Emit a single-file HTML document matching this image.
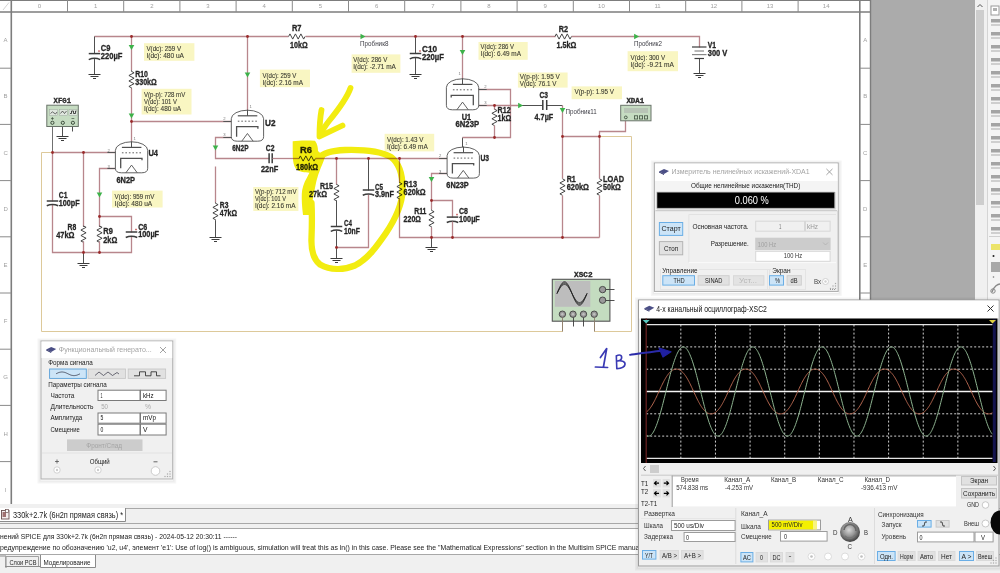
<!DOCTYPE html><html><head><meta charset="utf-8"><style>body{margin:0;width:1000px;height:573px;overflow:hidden;position:relative;background:#fff;font-family:"Liberation Sans",sans-serif}</style></head><body><svg width="1000" height="573" viewBox="0 0 1000 573" style="position:absolute;left:0;top:0" font-family="Liberation Sans, sans-serif"><rect x="0.00" y="0.00" width="1000.00" height="573.00" fill="#fff"/><rect x="871.00" y="0.00" width="104.00" height="508.00" fill="#ababab"/><rect x="975.00" y="0.00" width="12.00" height="508.00" fill="#f0f0f0"/><rect x="976.00" y="10.00" width="8.00" height="195.00" fill="#cdcdcd"/><path d="M977.5 7 L980 4.5 L982.5 7" stroke="#555" stroke-width="1" fill="none"/><rect x="987.00" y="0.00" width="1.00" height="508.00" fill="#d4d4d4"/><rect x="988.00" y="0.00" width="12.00" height="508.00" fill="#f6f6f6"/><rect x="988.00" y="0.00" width="12.00" height="508.00" fill="#f4f4f4"/><rect x="991.00" y="6.00" width="8.00" height="9.00" fill="#fff" stroke="#9a9a9a" stroke-width="1"/><rect x="993.00" y="8.00" width="4.00" height="3.00" fill="#b0b0b0"/><rect x="991.00" y="19.00" width="9.00" height="3.50" fill="#a4a4a4"/><rect x="991.00" y="24.00" width="9.00" height="2.00" fill="#cfcfcf"/><rect x="991.00" y="32.00" width="9.00" height="3.50" fill="#a4a4a4"/><rect x="991.00" y="37.00" width="9.00" height="2.00" fill="#cfcfcf"/><rect x="991.00" y="45.00" width="9.00" height="3.50" fill="#a4a4a4"/><rect x="991.00" y="50.00" width="9.00" height="2.00" fill="#cfcfcf"/><rect x="991.00" y="58.00" width="9.00" height="3.50" fill="#a4a4a4"/><rect x="991.00" y="63.00" width="9.00" height="2.00" fill="#cfcfcf"/><rect x="991.00" y="71.00" width="9.00" height="3.50" fill="#a4a4a4"/><rect x="991.00" y="76.00" width="9.00" height="2.00" fill="#cfcfcf"/><rect x="991.00" y="84.00" width="9.00" height="3.50" fill="#a4a4a4"/><rect x="991.00" y="89.00" width="9.00" height="2.00" fill="#cfcfcf"/><rect x="991.00" y="97.00" width="9.00" height="3.50" fill="#a4a4a4"/><rect x="991.00" y="102.00" width="9.00" height="2.00" fill="#cfcfcf"/><rect x="991.00" y="110.00" width="9.00" height="3.50" fill="#a4a4a4"/><rect x="991.00" y="115.00" width="9.00" height="2.00" fill="#cfcfcf"/><rect x="991.00" y="123.00" width="9.00" height="3.50" fill="#a4a4a4"/><rect x="991.00" y="128.00" width="9.00" height="2.00" fill="#cfcfcf"/><rect x="991.00" y="136.00" width="9.00" height="3.50" fill="#a4a4a4"/><rect x="991.00" y="141.00" width="9.00" height="2.00" fill="#cfcfcf"/><rect x="991.00" y="149.00" width="9.00" height="3.50" fill="#a4a4a4"/><rect x="991.00" y="154.00" width="9.00" height="2.00" fill="#cfcfcf"/><rect x="991.00" y="162.00" width="9.00" height="3.50" fill="#a4a4a4"/><rect x="991.00" y="167.00" width="9.00" height="2.00" fill="#cfcfcf"/><rect x="991.00" y="175.00" width="9.00" height="3.50" fill="#a4a4a4"/><rect x="991.00" y="180.00" width="9.00" height="2.00" fill="#cfcfcf"/><rect x="991.00" y="188.00" width="9.00" height="3.50" fill="#a4a4a4"/><rect x="991.00" y="193.00" width="9.00" height="2.00" fill="#cfcfcf"/><rect x="991.00" y="201.00" width="9.00" height="3.50" fill="#a4a4a4"/><rect x="991.00" y="206.00" width="9.00" height="2.00" fill="#cfcfcf"/><rect x="991.00" y="214.00" width="9.00" height="3.50" fill="#a4a4a4"/><rect x="991.00" y="219.00" width="9.00" height="2.00" fill="#cfcfcf"/><rect x="991.00" y="227.00" width="9.00" height="3.50" fill="#a4a4a4"/><rect x="991.00" y="232.00" width="9.00" height="2.00" fill="#cfcfcf"/><line x1="989.00" y1="236.50" x2="1000.00" y2="236.50" stroke="#cfcfcf" stroke-width="1"/><rect x="991.00" y="244.00" width="9.00" height="6.00" fill="#ece46a"/><circle cx="993.50" cy="256.00" r="1.00" fill="#222"/><rect x="991.00" y="262.00" width="9.00" height="10.00" fill="#a8a8a8"/><circle cx="993.50" cy="277.00" r="0.80" fill="#777"/><path d="M992 292 C994 286 998 284 1000 284" stroke="#888" stroke-width="1.4" fill="none"/><circle cx="993.00" cy="291.00" r="2.20" fill="none" stroke="#888" stroke-width="1"/><line x1="0.00" y1="0.50" x2="871.00" y2="0.50" stroke="#7d7d7d" stroke-width="1.2"/><line x1="3.00" y1="10.00" x2="9.00" y2="2.50" stroke="#c8c8c8" stroke-width="0.8"/><line x1="0.00" y1="12.00" x2="871.00" y2="12.00" stroke="#7d7d7d" stroke-width="1.6"/><line x1="11.30" y1="0.00" x2="11.30" y2="504.00" stroke="#7d7d7d" stroke-width="1.6"/><line x1="859.80" y1="0.00" x2="859.80" y2="504.00" stroke="#7d7d7d" stroke-width="1.6"/><line x1="870.50" y1="0.00" x2="870.50" y2="504.00" stroke="#7d7d7d" stroke-width="1.4"/><line x1="67.50" y1="0.00" x2="67.50" y2="12.00" stroke="#8a8a8a" stroke-width="1"/><line x1="123.70" y1="0.00" x2="123.70" y2="12.00" stroke="#8a8a8a" stroke-width="1"/><line x1="179.90" y1="0.00" x2="179.90" y2="12.00" stroke="#8a8a8a" stroke-width="1"/><line x1="236.10" y1="0.00" x2="236.10" y2="12.00" stroke="#8a8a8a" stroke-width="1"/><line x1="292.30" y1="0.00" x2="292.30" y2="12.00" stroke="#8a8a8a" stroke-width="1"/><line x1="348.50" y1="0.00" x2="348.50" y2="12.00" stroke="#8a8a8a" stroke-width="1"/><line x1="404.70" y1="0.00" x2="404.70" y2="12.00" stroke="#8a8a8a" stroke-width="1"/><line x1="460.90" y1="0.00" x2="460.90" y2="12.00" stroke="#8a8a8a" stroke-width="1"/><line x1="517.10" y1="0.00" x2="517.10" y2="12.00" stroke="#8a8a8a" stroke-width="1"/><line x1="573.30" y1="0.00" x2="573.30" y2="12.00" stroke="#8a8a8a" stroke-width="1"/><line x1="629.50" y1="0.00" x2="629.50" y2="12.00" stroke="#8a8a8a" stroke-width="1"/><line x1="685.70" y1="0.00" x2="685.70" y2="12.00" stroke="#8a8a8a" stroke-width="1"/><line x1="741.90" y1="0.00" x2="741.90" y2="12.00" stroke="#8a8a8a" stroke-width="1"/><line x1="798.10" y1="0.00" x2="798.10" y2="12.00" stroke="#8a8a8a" stroke-width="1"/><text x="39.4" y="7.8" font-size="6" fill="#a0a0a0" text-anchor="middle">0</text><text x="95.6" y="7.8" font-size="6" fill="#a0a0a0" text-anchor="middle">1</text><text x="151.8" y="7.8" font-size="6" fill="#a0a0a0" text-anchor="middle">2</text><text x="208.0" y="7.8" font-size="6" fill="#a0a0a0" text-anchor="middle">3</text><text x="264.2" y="7.8" font-size="6" fill="#a0a0a0" text-anchor="middle">4</text><text x="320.4" y="7.8" font-size="6" fill="#a0a0a0" text-anchor="middle">5</text><text x="376.6" y="7.8" font-size="6" fill="#a0a0a0" text-anchor="middle">6</text><text x="432.8" y="7.8" font-size="6" fill="#a0a0a0" text-anchor="middle">7</text><text x="489.0" y="7.8" font-size="6" fill="#a0a0a0" text-anchor="middle">8</text><text x="545.2" y="7.8" font-size="6" fill="#a0a0a0" text-anchor="middle">9</text><text x="601.4" y="7.8" font-size="6" fill="#a0a0a0" text-anchor="middle">10</text><text x="657.6" y="7.8" font-size="6" fill="#a0a0a0" text-anchor="middle">11</text><text x="713.8" y="7.8" font-size="6" fill="#a0a0a0" text-anchor="middle">12</text><text x="770.0" y="7.8" font-size="6" fill="#a0a0a0" text-anchor="middle">13</text><text x="826.2" y="7.8" font-size="6" fill="#a0a0a0" text-anchor="middle">14</text><line x1="0.00" y1="68.20" x2="11.30" y2="68.20" stroke="#8a8a8a" stroke-width="1"/><line x1="859.80" y1="68.20" x2="870.50" y2="68.20" stroke="#8a8a8a" stroke-width="1"/><text x="5.6" y="42.1" font-size="6" fill="#a0a0a0" text-anchor="middle">A</text><text x="865.2" y="42.1" font-size="6" fill="#a0a0a0" text-anchor="middle">A</text><line x1="0.00" y1="124.40" x2="11.30" y2="124.40" stroke="#8a8a8a" stroke-width="1"/><line x1="859.80" y1="124.40" x2="870.50" y2="124.40" stroke="#8a8a8a" stroke-width="1"/><text x="5.6" y="98.3" font-size="6" fill="#a0a0a0" text-anchor="middle">B</text><text x="865.2" y="98.3" font-size="6" fill="#a0a0a0" text-anchor="middle">B</text><line x1="0.00" y1="180.60" x2="11.30" y2="180.60" stroke="#8a8a8a" stroke-width="1"/><line x1="859.80" y1="180.60" x2="870.50" y2="180.60" stroke="#8a8a8a" stroke-width="1"/><text x="5.6" y="154.5" font-size="6" fill="#a0a0a0" text-anchor="middle">C</text><text x="865.2" y="154.5" font-size="6" fill="#a0a0a0" text-anchor="middle">C</text><line x1="0.00" y1="236.80" x2="11.30" y2="236.80" stroke="#8a8a8a" stroke-width="1"/><line x1="859.80" y1="236.80" x2="870.50" y2="236.80" stroke="#8a8a8a" stroke-width="1"/><text x="5.6" y="210.7" font-size="6" fill="#a0a0a0" text-anchor="middle">D</text><text x="865.2" y="210.7" font-size="6" fill="#a0a0a0" text-anchor="middle">D</text><line x1="0.00" y1="293.00" x2="11.30" y2="293.00" stroke="#8a8a8a" stroke-width="1"/><line x1="859.80" y1="293.00" x2="870.50" y2="293.00" stroke="#8a8a8a" stroke-width="1"/><text x="5.6" y="266.9" font-size="6" fill="#a0a0a0" text-anchor="middle">E</text><text x="865.2" y="266.9" font-size="6" fill="#a0a0a0" text-anchor="middle">E</text><line x1="0.00" y1="349.20" x2="11.30" y2="349.20" stroke="#8a8a8a" stroke-width="1"/><line x1="859.80" y1="349.20" x2="870.50" y2="349.20" stroke="#8a8a8a" stroke-width="1"/><text x="5.6" y="323.1" font-size="6" fill="#a0a0a0" text-anchor="middle">F</text><text x="865.2" y="323.1" font-size="6" fill="#a0a0a0" text-anchor="middle">F</text><line x1="0.00" y1="405.40" x2="11.30" y2="405.40" stroke="#8a8a8a" stroke-width="1"/><line x1="859.80" y1="405.40" x2="870.50" y2="405.40" stroke="#8a8a8a" stroke-width="1"/><text x="5.6" y="379.3" font-size="6" fill="#a0a0a0" text-anchor="middle">G</text><text x="865.2" y="379.3" font-size="6" fill="#a0a0a0" text-anchor="middle">G</text><line x1="0.00" y1="461.60" x2="11.30" y2="461.60" stroke="#8a8a8a" stroke-width="1"/><line x1="859.80" y1="461.60" x2="870.50" y2="461.60" stroke="#8a8a8a" stroke-width="1"/><text x="5.6" y="435.5" font-size="6" fill="#a0a0a0" text-anchor="middle">H</text><text x="865.2" y="435.5" font-size="6" fill="#a0a0a0" text-anchor="middle">H</text><text x="5.6" y="491.7" font-size="6" fill="#a0a0a0" text-anchor="middle">I</text><text x="865.2" y="491.7" font-size="6" fill="#a0a0a0" text-anchor="middle">I</text><path d="M94.50,36.50 L288.50,36.50" stroke="#b8868c" stroke-width="1.3" fill="none" stroke-linejoin="miter"/><path d="M305.50,36.50 L555.50,36.50" stroke="#b8868c" stroke-width="1.3" fill="none" stroke-linejoin="miter"/><path d="M571.50,36.50 L699.50,36.50 L699.50,47.50" stroke="#b8868c" stroke-width="1.3" fill="none" stroke-linejoin="miter"/><path d="M288.60,36.50 L288.60,36.50 L289.97,33.90 L292.70,39.10 L295.43,33.90 L298.17,39.10 L300.90,33.90 L303.63,39.10 L305.00,36.50 L305.00,36.50" stroke="#3c3c3c" stroke-width="0.95" fill="none" stroke-linejoin="miter"/><path d="M555.00,36.50 L555.00,36.50 L556.37,33.90 L559.10,39.10 L561.83,33.90 L564.57,39.10 L567.30,33.90 L570.03,39.10 L571.40,36.50 L571.40,36.50" stroke="#3c3c3c" stroke-width="0.95" fill="none" stroke-linejoin="miter"/><path d="M94.50,36.50 L94.50,53.50" stroke="#3c3c3c" stroke-width="0.9" fill="none" stroke-linejoin="miter"/><path d="M94.50,58.50 L94.50,74.50" stroke="#3c3c3c" stroke-width="0.9" fill="none" stroke-linejoin="miter"/><line x1="88.75" y1="53.60" x2="100.25" y2="53.60" stroke="#3c3c3c" stroke-width="1.5"/><path d="M88.75,59.60 Q94.50,57.00 100.25,59.60" stroke="#3c3c3c" stroke-width="1.5" fill="none"/><path d="M98.00,51.10 L100.00,51.10 M99.00,50.10 L99.00,52.10" stroke="#c04040" stroke-width="0.6" fill="none"/><line x1="88.50" y1="74.50" x2="100.50" y2="74.50" stroke="#3c3c3c" stroke-width="1"/><line x1="90.50" y1="76.50" x2="98.50" y2="76.50" stroke="#3c3c3c" stroke-width="1"/><line x1="93.00" y1="78.50" x2="96.00" y2="78.50" stroke="#3c3c3c" stroke-width="1"/><path d="M131.50,36.50 L131.50,70.50" stroke="#b8868c" stroke-width="1.3" fill="none" stroke-linejoin="miter"/><path d="M131.50,70.40 L131.50,71.40 L134.10,72.77 L128.90,75.50 L134.10,78.23 L128.90,80.97 L134.10,83.70 L128.90,86.43 L131.50,87.80 L131.50,88.80" stroke="#3c3c3c" stroke-width="0.95" fill="none" stroke-linejoin="miter"/><path d="M131.50,88.50 L131.50,141.50" stroke="#b8868c" stroke-width="1.3" fill="none" stroke-linejoin="miter"/><path d="M131.50,121.50 L231.50,121.50" stroke="#b8868c" stroke-width="1.3" fill="none" stroke-linejoin="miter"/><path d="M247.50,36.50 L247.50,110.50" stroke="#b8868c" stroke-width="1.3" fill="none" stroke-linejoin="miter"/><path d="M231.50,137.50 L215.50,137.50 L215.50,158.50 L269.50,158.50" stroke="#b8868c" stroke-width="1.3" fill="none" stroke-linejoin="miter"/><line x1="269.10" y1="153.20" x2="269.10" y2="163.20" stroke="#3c3c3c" stroke-width="1.5"/><line x1="272.20" y1="153.20" x2="272.20" y2="163.20" stroke="#3c3c3c" stroke-width="1.5"/><path d="M272.50,158.50 L299.50,158.50" stroke="#b8868c" stroke-width="1.3" fill="none" stroke-linejoin="miter"/><path d="M299.00,158.50 L299.00,158.50 L300.37,155.90 L303.10,161.10 L305.83,155.90 L308.57,161.10 L311.30,155.90 L314.03,161.10 L315.40,158.50 L315.40,158.50" stroke="#3c3c3c" stroke-width="0.95" fill="none" stroke-linejoin="miter"/><path d="M315.50,158.50 L447.50,158.50" stroke="#b8868c" stroke-width="1.3" fill="none" stroke-linejoin="miter"/><path d="M215.50,166.50 L215.50,202.50" stroke="#b8868c" stroke-width="1.3" fill="none" stroke-linejoin="miter"/><path d="M215.50,202.40 L215.50,203.30 L218.10,204.67 L212.90,207.40 L218.10,210.13 L212.90,212.87 L218.10,215.60 L212.90,218.33 L215.50,219.70 L215.50,220.60" stroke="#3c3c3c" stroke-width="0.95" fill="none" stroke-linejoin="miter"/><path d="M215.50,220.50 L215.50,237.50" stroke="#3c3c3c" stroke-width="0.9" fill="none" stroke-linejoin="miter"/><line x1="209.50" y1="237.50" x2="221.50" y2="237.50" stroke="#3c3c3c" stroke-width="1"/><line x1="211.50" y1="239.50" x2="219.50" y2="239.50" stroke="#3c3c3c" stroke-width="1"/><line x1="214.00" y1="241.50" x2="217.00" y2="241.50" stroke="#3c3c3c" stroke-width="1"/><path d="M336.50,158.50 L336.50,184.50" stroke="#b8868c" stroke-width="1.3" fill="none" stroke-linejoin="miter"/><path d="M336.50,184.70 L336.50,184.40 L339.10,185.77 L333.90,188.50 L339.10,191.23 L333.90,193.97 L339.10,196.70 L333.90,199.43 L336.50,200.80 L336.50,200.50" stroke="#3c3c3c" stroke-width="0.95" fill="none" stroke-linejoin="miter"/><path d="M336.50,200.50 L336.50,226.50" stroke="#3c3c3c" stroke-width="0.9" fill="none" stroke-linejoin="miter"/><line x1="330.75" y1="226.50" x2="342.25" y2="226.50" stroke="#3c3c3c" stroke-width="1.5"/><path d="M330.75,231.40 Q336.50,228.80 342.25,231.40" stroke="#3c3c3c" stroke-width="1.5" fill="none"/><path d="M336.50,230.50 L336.50,258.50" stroke="#3c3c3c" stroke-width="0.9" fill="none" stroke-linejoin="miter"/><line x1="330.50" y1="258.50" x2="342.50" y2="258.50" stroke="#3c3c3c" stroke-width="1"/><line x1="332.50" y1="260.50" x2="340.50" y2="260.50" stroke="#3c3c3c" stroke-width="1"/><line x1="335.00" y1="262.50" x2="338.00" y2="262.50" stroke="#3c3c3c" stroke-width="1"/><path d="M336.50,247.50 L368.50,247.50 L368.50,194.50" stroke="#b8868c" stroke-width="1.3" fill="none" stroke-linejoin="miter"/><path d="M368.50,158.50 L368.50,190.50" stroke="#3c3c3c" stroke-width="0.9" fill="none" stroke-linejoin="miter"/><line x1="362.75" y1="190.00" x2="374.25" y2="190.00" stroke="#3c3c3c" stroke-width="1.5"/><path d="M362.75,195.20 Q368.50,192.60 374.25,195.20" stroke="#3c3c3c" stroke-width="1.5" fill="none"/><path d="M399.50,158.50 L399.50,182.50" stroke="#b8868c" stroke-width="1.3" fill="none" stroke-linejoin="miter"/><path d="M399.50,182.80 L399.50,182.45 L402.10,183.82 L396.90,186.55 L402.10,189.28 L396.90,192.02 L402.10,194.75 L396.90,197.48 L399.50,198.85 L399.50,198.50" stroke="#3c3c3c" stroke-width="0.95" fill="none" stroke-linejoin="miter"/><path d="M399.50,198.50 L399.50,237.50 L599.50,237.50" stroke="#b8868c" stroke-width="1.3" fill="none" stroke-linejoin="miter"/><path d="M462.50,137.50 L462.50,152.50" stroke="#3c3c3c" stroke-width="0.9" fill="none" stroke-linejoin="miter"/><path d="M462.50,137.50 L510.50,137.50 L510.50,89.50 L478.50,89.50" stroke="#b8868c" stroke-width="1.3" fill="none" stroke-linejoin="miter"/><path d="M447.50,173.50 L431.50,173.50 L431.50,209.50" stroke="#b8868c" stroke-width="1.3" fill="none" stroke-linejoin="miter"/><path d="M431.50,209.50 L431.50,210.35 L434.10,211.72 L428.90,214.45 L434.10,217.18 L428.90,219.92 L434.10,222.65 L428.90,225.38 L431.50,226.75 L431.50,227.60" stroke="#3c3c3c" stroke-width="0.95" fill="none" stroke-linejoin="miter"/><path d="M431.50,227.50 L431.50,237.50" stroke="#b8868c" stroke-width="1.3" fill="none" stroke-linejoin="miter"/><path d="M431.50,237.50 L431.50,247.50" stroke="#3c3c3c" stroke-width="0.9" fill="none" stroke-linejoin="miter"/><line x1="425.50" y1="247.50" x2="437.50" y2="247.50" stroke="#3c3c3c" stroke-width="1"/><line x1="427.50" y1="249.50" x2="435.50" y2="249.50" stroke="#3c3c3c" stroke-width="1"/><line x1="430.00" y1="251.50" x2="433.00" y2="251.50" stroke="#3c3c3c" stroke-width="1"/><path d="M431.50,200.50 L452.50,200.50 L452.50,217.50" stroke="#b8868c" stroke-width="1.3" fill="none" stroke-linejoin="miter"/><line x1="446.75" y1="217.10" x2="458.25" y2="217.10" stroke="#3c3c3c" stroke-width="1.5"/><path d="M446.75,222.50 Q452.50,219.90 458.25,222.50" stroke="#3c3c3c" stroke-width="1.5" fill="none"/><path d="M456.00,214.60 L458.00,214.60 M457.00,213.60 L457.00,215.60" stroke="#c04040" stroke-width="0.6" fill="none"/><path d="M452.50,221.50 L452.50,237.50" stroke="#b8868c" stroke-width="1.3" fill="none" stroke-linejoin="miter"/><path d="M462.50,36.50 L462.50,84.50" stroke="#b8868c" stroke-width="1.3" fill="none" stroke-linejoin="miter"/><path d="M415.50,36.50 L415.50,53.50" stroke="#3c3c3c" stroke-width="0.9" fill="none" stroke-linejoin="miter"/><line x1="409.75" y1="53.50" x2="421.25" y2="53.50" stroke="#3c3c3c" stroke-width="1.5"/><path d="M409.75,58.90 Q415.50,56.30 421.25,58.90" stroke="#3c3c3c" stroke-width="1.5" fill="none"/><path d="M419.00,51.00 L421.00,51.00 M420.00,50.00 L420.00,52.00" stroke="#c04040" stroke-width="0.6" fill="none"/><path d="M415.50,57.50 L415.50,74.50" stroke="#3c3c3c" stroke-width="0.9" fill="none" stroke-linejoin="miter"/><line x1="409.50" y1="74.50" x2="421.50" y2="74.50" stroke="#3c3c3c" stroke-width="1"/><line x1="411.50" y1="76.50" x2="419.50" y2="76.50" stroke="#3c3c3c" stroke-width="1"/><line x1="414.00" y1="78.50" x2="417.00" y2="78.50" stroke="#3c3c3c" stroke-width="1"/><path d="M478.50,105.50 L520.50,105.50" stroke="#b8868c" stroke-width="1.3" fill="none" stroke-linejoin="miter"/><path d="M520.50,105.50 L542.50,105.50" stroke="#3c3c3c" stroke-width="0.9" fill="none" stroke-linejoin="miter"/><line x1="542.80" y1="100.00" x2="542.80" y2="110.00" stroke="#3c3c3c" stroke-width="1.5"/><line x1="546.70" y1="100.00" x2="546.70" y2="110.00" stroke="#3c3c3c" stroke-width="1.5"/><path d="M546.50,105.50 L562.50,105.50" stroke="#3c3c3c" stroke-width="0.9" fill="none" stroke-linejoin="miter"/><path d="M562.50,105.50 L562.50,178.50" stroke="#b8868c" stroke-width="1.3" fill="none" stroke-linejoin="miter"/><path d="M494.50,105.50 L494.50,109.50" stroke="#b8868c" stroke-width="1.3" fill="none" stroke-linejoin="miter"/><path d="M494.50,109.20 L494.50,109.20 L497.10,110.57 L491.90,113.30 L497.10,116.03 L491.90,118.77 L497.10,121.50 L491.90,124.23 L494.50,125.60 L494.50,125.60" stroke="#3c3c3c" stroke-width="0.95" fill="none" stroke-linejoin="miter"/><path d="M494.50,125.50 L494.50,137.50" stroke="#b8868c" stroke-width="1.3" fill="none" stroke-linejoin="miter"/><path d="M562.50,178.80 L562.50,178.85 L565.10,180.22 L559.90,182.95 L565.10,185.68 L559.90,188.42 L565.10,191.15 L559.90,193.88 L562.50,195.25 L562.50,195.30" stroke="#3c3c3c" stroke-width="0.95" fill="none" stroke-linejoin="miter"/><path d="M562.50,195.50 L562.50,237.50" stroke="#b8868c" stroke-width="1.3" fill="none" stroke-linejoin="miter"/><path d="M562.50,136.50 L599.50,136.50" stroke="#b8868c" stroke-width="1.3" fill="none" stroke-linejoin="miter"/><path d="M625.50,120.50 L625.50,131.50 L599.50,131.50 L599.50,178.50" stroke="#b8868c" stroke-width="1.3" fill="none" stroke-linejoin="miter"/><path d="M599.50,178.80 L599.50,178.85 L602.10,180.22 L596.90,182.95 L602.10,185.68 L596.90,188.42 L602.10,191.15 L596.90,193.88 L599.50,195.25 L599.50,195.30" stroke="#3c3c3c" stroke-width="0.95" fill="none" stroke-linejoin="miter"/><path d="M599.50,195.50 L599.50,237.50" stroke="#b8868c" stroke-width="1.3" fill="none" stroke-linejoin="miter"/><line x1="692.00" y1="47.00" x2="706.50" y2="47.00" stroke="#3c3c3c" stroke-width="1.2"/><line x1="694.50" y1="51.00" x2="704.00" y2="51.00" stroke="#888" stroke-width="1.2"/><line x1="692.00" y1="54.60" x2="706.50" y2="54.60" stroke="#888" stroke-width="1.2"/><line x1="694.50" y1="58.50" x2="704.00" y2="58.50" stroke="#3c3c3c" stroke-width="1.2"/><path d="M699.50,58.50 L699.50,73.50" stroke="#3c3c3c" stroke-width="0.9" fill="none" stroke-linejoin="miter"/><line x1="693.50" y1="73.50" x2="705.50" y2="73.50" stroke="#3c3c3c" stroke-width="1"/><line x1="695.50" y1="75.50" x2="703.50" y2="75.50" stroke="#3c3c3c" stroke-width="1"/><line x1="698.00" y1="77.50" x2="701.00" y2="77.50" stroke="#3c3c3c" stroke-width="1"/><path d="M52.50,126.50 L52.50,152.50" stroke="#606060" stroke-width="0.9" fill="none" stroke-linejoin="miter"/><path d="M52.50,152.50 L52.50,201.50" stroke="#b8868c" stroke-width="1.3" fill="none" stroke-linejoin="miter"/><path d="M52.50,204.50 L52.50,252.50 L131.50,252.50 L131.50,236.50" stroke="#b8868c" stroke-width="1.3" fill="none" stroke-linejoin="miter"/><line x1="46.75" y1="201.00" x2="58.25" y2="201.00" stroke="#3c3c3c" stroke-width="1.5"/><path d="M46.75,205.70 Q52.50,203.10 58.25,205.70" stroke="#3c3c3c" stroke-width="1.5" fill="none"/><path d="M41.50,152.50 L52.50,152.50" stroke="#ddc99a" stroke-width="1.0" fill="none" stroke-linejoin="miter"/><path d="M52.50,152.50 L115.50,152.50" stroke="#b8868c" stroke-width="1.3" fill="none" stroke-linejoin="miter"/><path d="M62.50,126.50 L62.50,136.50" stroke="#3c3c3c" stroke-width="0.9" fill="none" stroke-linejoin="miter"/><line x1="56.50" y1="136.50" x2="68.50" y2="136.50" stroke="#3c3c3c" stroke-width="1"/><line x1="58.50" y1="138.50" x2="66.50" y2="138.50" stroke="#3c3c3c" stroke-width="1"/><line x1="61.00" y1="140.50" x2="64.00" y2="140.50" stroke="#3c3c3c" stroke-width="1"/><path d="M72.50,126.50 L72.50,131.50" stroke="#3c3c3c" stroke-width="0.9" fill="none" stroke-linejoin="miter"/><path d="M83.50,152.50 L83.50,226.50" stroke="#b8868c" stroke-width="1.3" fill="none" stroke-linejoin="miter"/><path d="M83.50,226.70 L83.50,225.95 L86.10,227.32 L80.90,230.05 L86.10,232.78 L80.90,235.52 L86.10,238.25 L80.90,240.98 L83.50,242.35 L83.50,241.60" stroke="#3c3c3c" stroke-width="0.95" fill="none" stroke-linejoin="miter"/><path d="M83.50,241.50 L83.50,252.50" stroke="#b8868c" stroke-width="1.3" fill="none" stroke-linejoin="miter"/><path d="M83.50,252.50 L83.50,263.50" stroke="#3c3c3c" stroke-width="0.9" fill="none" stroke-linejoin="miter"/><line x1="77.50" y1="263.50" x2="89.50" y2="263.50" stroke="#3c3c3c" stroke-width="1"/><line x1="79.50" y1="265.50" x2="87.50" y2="265.50" stroke="#3c3c3c" stroke-width="1"/><line x1="82.00" y1="267.50" x2="85.00" y2="267.50" stroke="#3c3c3c" stroke-width="1"/><path d="M115.50,168.50 L99.50,168.50 L99.50,226.50" stroke="#b8868c" stroke-width="1.3" fill="none" stroke-linejoin="miter"/><path d="M99.50,226.70 L99.50,225.95 L102.10,227.32 L96.90,230.05 L102.10,232.78 L96.90,235.52 L102.10,238.25 L96.90,240.98 L99.50,242.35 L99.50,241.60" stroke="#3c3c3c" stroke-width="0.95" fill="none" stroke-linejoin="miter"/><path d="M99.50,241.50 L99.50,252.50" stroke="#b8868c" stroke-width="1.3" fill="none" stroke-linejoin="miter"/><path d="M99.50,216.50 L131.50,216.50 L131.50,232.50" stroke="#b8868c" stroke-width="1.3" fill="none" stroke-linejoin="miter"/><line x1="125.75" y1="232.00" x2="137.25" y2="232.00" stroke="#3c3c3c" stroke-width="1.5"/><path d="M125.75,237.50 Q131.50,234.90 137.25,237.50" stroke="#3c3c3c" stroke-width="1.5" fill="none"/><path d="M135.00,229.50 L137.00,229.50 M136.00,228.50 L136.00,230.50" stroke="#c04040" stroke-width="0.6" fill="none"/><path d="M41.50,152.50 L41.50,331.50 L562.50,331.50 L562.50,317.50" stroke="#ddc99a" stroke-width="1.0" fill="none" stroke-linejoin="miter"/><path d="M594.50,317.50 L594.50,331.50 L631.50,331.50 L631.50,136.50 L599.50,136.50" stroke="#ddc99a" stroke-width="1.0" fill="none" stroke-linejoin="miter"/><circle cx="131.50" cy="36.50" r="1.40" fill="#9a2a2a"/><circle cx="247.50" cy="36.50" r="1.40" fill="#9a2a2a"/><circle cx="415.50" cy="36.50" r="1.40" fill="#9a2a2a"/><circle cx="462.50" cy="36.50" r="1.40" fill="#9a2a2a"/><circle cx="131.50" cy="121.50" r="1.40" fill="#9a2a2a"/><circle cx="336.50" cy="158.50" r="1.40" fill="#9a2a2a"/><circle cx="368.50" cy="158.50" r="1.40" fill="#9a2a2a"/><circle cx="399.50" cy="158.50" r="1.40" fill="#9a2a2a"/><circle cx="336.50" cy="247.50" r="1.40" fill="#9a2a2a"/><circle cx="431.50" cy="237.50" r="1.40" fill="#9a2a2a"/><circle cx="452.50" cy="237.50" r="1.40" fill="#9a2a2a"/><circle cx="562.50" cy="237.50" r="1.40" fill="#9a2a2a"/><circle cx="431.50" cy="200.50" r="1.40" fill="#9a2a2a"/><circle cx="494.50" cy="137.50" r="1.40" fill="#9a2a2a"/><circle cx="494.50" cy="105.50" r="1.40" fill="#9a2a2a"/><circle cx="562.50" cy="136.50" r="1.40" fill="#9a2a2a"/><circle cx="599.50" cy="136.50" r="1.40" fill="#9a2a2a"/><circle cx="52.50" cy="152.50" r="1.40" fill="#9a2a2a"/><circle cx="83.50" cy="152.50" r="1.40" fill="#9a2a2a"/><circle cx="83.50" cy="252.50" r="1.40" fill="#9a2a2a"/><circle cx="99.50" cy="252.50" r="1.40" fill="#9a2a2a"/><circle cx="99.50" cy="216.50" r="1.40" fill="#9a2a2a"/><line x1="107.40" y1="152.50" x2="115.90" y2="152.50" stroke="#555" stroke-width="1.0"/><line x1="107.40" y1="168.50" x2="115.90" y2="168.50" stroke="#555" stroke-width="1.0"/><path d="M115.40,168.30 L115.40,150.30 A16.15,8.5 0 0 1 147.70,150.30 L147.70,168.30 Q147.70,172.80 141.70,172.80 L121.40,172.80 Q115.40,172.80 115.40,168.30 Z" stroke="#505050" stroke-width="0.9" fill="#fff"/><line x1="131.50" y1="141.30" x2="131.50" y2="147.40" stroke="#505050" stroke-width="1.0"/><line x1="121.90" y1="147.40" x2="141.40" y2="147.40" stroke="#505050" stroke-width="1.2"/><line x1="121.90" y1="152.80" x2="141.40" y2="152.80" stroke="#505050" stroke-width="0.9" stroke-dasharray="1.6 1.9"/><path d="M120.70,168.30 L120.70,158.30 L142.00,158.30 L142.00,160.30" stroke="#505050" stroke-width="1.3" fill="none"/><path d="M125.85,172.80 L131.55,165.10 L137.25,172.80" stroke="#505050" stroke-width="0.9" fill="none"/><text x="133.55" y="139.80" font-size="4.22" fill="#777" textLength="2.34" lengthAdjust="spacingAndGlyphs">1</text><text x="107.40" y="151.80" font-size="4.22" fill="#777" textLength="2.34" lengthAdjust="spacingAndGlyphs">2</text><text x="107.40" y="167.60" font-size="4.22" fill="#777" textLength="2.34" lengthAdjust="spacingAndGlyphs">3</text><line x1="223.30" y1="121.50" x2="231.80" y2="121.50" stroke="#555" stroke-width="1.0"/><line x1="223.30" y1="137.50" x2="231.80" y2="137.50" stroke="#555" stroke-width="1.0"/><path d="M231.30,136.70 L231.30,118.70 A16.15,8.5 0 0 1 263.60,118.70 L263.60,136.70 Q263.60,141.20 257.60,141.20 L237.30,141.20 Q231.30,141.20 231.30,136.70 Z" stroke="#505050" stroke-width="0.9" fill="#fff"/><line x1="247.50" y1="109.70" x2="247.50" y2="115.80" stroke="#505050" stroke-width="1.0"/><line x1="237.80" y1="115.80" x2="257.30" y2="115.80" stroke="#505050" stroke-width="1.2"/><line x1="237.80" y1="121.20" x2="257.30" y2="121.20" stroke="#505050" stroke-width="0.9" stroke-dasharray="1.6 1.9"/><path d="M236.60,136.70 L236.60,126.70 L257.90,126.70 L257.90,128.70" stroke="#505050" stroke-width="1.3" fill="none"/><path d="M241.75,141.20 L247.45,133.50 L253.15,141.20" stroke="#505050" stroke-width="0.9" fill="none"/><text x="249.45" y="108.20" font-size="4.22" fill="#777" textLength="2.34" lengthAdjust="spacingAndGlyphs">1</text><text x="223.30" y="120.20" font-size="4.22" fill="#777" textLength="2.34" lengthAdjust="spacingAndGlyphs">2</text><text x="223.30" y="136.00" font-size="4.22" fill="#777" textLength="2.34" lengthAdjust="spacingAndGlyphs">3</text><line x1="439.10" y1="158.50" x2="447.60" y2="158.50" stroke="#555" stroke-width="1.0"/><line x1="439.10" y1="173.50" x2="447.60" y2="173.50" stroke="#555" stroke-width="1.0"/><path d="M447.10,173.60 L447.10,155.60 A16.15,8.5 0 0 1 479.40,155.60 L479.40,173.60 Q479.40,178.10 473.40,178.10 L453.10,178.10 Q447.10,178.10 447.10,173.60 Z" stroke="#505050" stroke-width="0.9" fill="#fff"/><line x1="463.50" y1="146.60" x2="463.50" y2="152.70" stroke="#505050" stroke-width="1.0"/><line x1="453.60" y1="152.70" x2="473.10" y2="152.70" stroke="#505050" stroke-width="1.2"/><line x1="453.60" y1="158.10" x2="473.10" y2="158.10" stroke="#505050" stroke-width="0.9" stroke-dasharray="1.6 1.9"/><path d="M452.40,173.60 L452.40,163.60 L473.70,163.60 L473.70,165.60" stroke="#505050" stroke-width="1.3" fill="none"/><path d="M457.55,178.10 L463.25,170.40 L468.95,178.10" stroke="#505050" stroke-width="0.9" fill="none"/><text x="465.25" y="145.10" font-size="4.22" fill="#777" textLength="2.34" lengthAdjust="spacingAndGlyphs">1</text><text x="439.10" y="157.10" font-size="4.22" fill="#777" textLength="2.34" lengthAdjust="spacingAndGlyphs">2</text><text x="439.10" y="172.90" font-size="4.22" fill="#777" textLength="2.34" lengthAdjust="spacingAndGlyphs">3</text><line x1="478.20" y1="89.50" x2="486.70" y2="89.50" stroke="#555" stroke-width="1.0"/><line x1="478.20" y1="105.50" x2="486.70" y2="105.50" stroke="#555" stroke-width="1.0"/><path d="M446.40,105.30 L446.40,87.30 A16.15,8.5 0 0 1 478.70,87.30 L478.70,105.30 Q478.70,109.80 472.70,109.80 L452.40,109.80 Q446.40,109.80 446.40,105.30 Z" stroke="#505050" stroke-width="0.9" fill="#fff"/><line x1="462.50" y1="78.30" x2="462.50" y2="84.40" stroke="#505050" stroke-width="1.0"/><line x1="452.90" y1="84.40" x2="472.40" y2="84.40" stroke="#505050" stroke-width="1.2"/><line x1="452.90" y1="89.80" x2="472.40" y2="89.80" stroke="#505050" stroke-width="0.9" stroke-dasharray="1.6 1.9"/><path d="M451.20,97.50 L451.20,95.30 L473.30,95.30 L473.30,105.30" stroke="#505050" stroke-width="1.3" fill="none"/><path d="M456.85,109.80 L462.55,102.10 L468.25,109.80" stroke="#505050" stroke-width="0.9" fill="none"/><text x="458.55" y="74.80" font-size="4.22" fill="#777" textLength="2.34" lengthAdjust="spacingAndGlyphs">1</text><text x="484.20" y="88.00" font-size="4.22" fill="#777" textLength="2.34" lengthAdjust="spacingAndGlyphs">2</text><text x="484.20" y="103.80" font-size="4.22" fill="#777" textLength="2.34" lengthAdjust="spacingAndGlyphs">3</text><path d="M128.70,45.00 L134.30,45.00 L131.50,50.00 Z" stroke="none" stroke-width="1" fill="#3db24a"/><path d="M128.70,113.50 L134.30,113.50 L131.50,118.50 Z" stroke="none" stroke-width="1" fill="#3db24a"/><path d="M244.70,72.50 L250.30,72.50 L247.50,77.50 Z" stroke="none" stroke-width="1" fill="#3db24a"/><path d="M212.70,145.50 L218.30,145.50 L215.50,150.50 Z" stroke="none" stroke-width="1" fill="#3db24a"/><path d="M96.70,192.50 L102.30,192.50 L99.50,197.50 Z" stroke="none" stroke-width="1" fill="#3db24a"/><path d="M459.70,50.00 L465.30,50.00 L462.50,55.00 Z" stroke="none" stroke-width="1" fill="#3db24a"/><path d="M428.70,177.00 L434.30,177.00 L431.50,182.00 Z" stroke="none" stroke-width="1" fill="#3db24a"/><path d="M559.70,108.00 L565.30,108.00 L562.50,113.00 Z" stroke="none" stroke-width="1" fill="#3db24a"/><path d="M360.50,33.70 L365.50,36.50 L360.50,39.30 Z" stroke="none" stroke-width="1" fill="#3db24a"/><path d="M634.10,33.70 L639.10,36.50 L634.10,39.30 Z" stroke="none" stroke-width="1" fill="#3db24a"/><path d="M518.10,102.70 L523.10,105.50 L518.10,108.30 Z" stroke="none" stroke-width="1" fill="#3db24a"/><text x="360.00" y="45.60" font-size="6.40" fill="#404048" textLength="28.39" lengthAdjust="spacingAndGlyphs">Пробник8</text><text x="634.00" y="45.60" font-size="6.40" fill="#404048" textLength="27.99" lengthAdjust="spacingAndGlyphs">Пробник2</text><text x="565.60" y="114.40" font-size="6.40" fill="#404048" textLength="31.20" lengthAdjust="spacingAndGlyphs">Пробник11</text><text x="100.80" y="50.60" font-size="8.58" fill="#262626" font-weight="bold" textLength="9.59" lengthAdjust="spacingAndGlyphs" stroke="#262626" stroke-width="0.3">C9</text><text x="100.80" y="59.40" font-size="8.58" fill="#262626" font-weight="bold" textLength="21.60" lengthAdjust="spacingAndGlyphs" stroke="#262626" stroke-width="0.3">220µF</text><text x="135.20" y="76.50" font-size="8.58" fill="#262626" font-weight="bold" textLength="12.80" lengthAdjust="spacingAndGlyphs" stroke="#262626" stroke-width="0.3">R10</text><text x="135.20" y="85.00" font-size="8.58" fill="#262626" font-weight="bold" textLength="21.61" lengthAdjust="spacingAndGlyphs" stroke="#262626" stroke-width="0.3">330kΩ</text><text x="148.40" y="156.10" font-size="8.58" fill="#262626" font-weight="bold" textLength="9.59" lengthAdjust="spacingAndGlyphs" stroke="#262626" stroke-width="0.3">U4</text><text x="116.40" y="183.30" font-size="8.58" fill="#262626" font-weight="bold" textLength="18.61" lengthAdjust="spacingAndGlyphs" stroke="#262626" stroke-width="0.3">6N2P</text><text x="58.80" y="198.10" font-size="8.58" fill="#262626" font-weight="bold" textLength="8.69" lengthAdjust="spacingAndGlyphs" stroke="#262626" stroke-width="0.3">C1</text><text x="58.80" y="206.00" font-size="8.58" fill="#262626" font-weight="bold" textLength="20.90" lengthAdjust="spacingAndGlyphs" stroke="#262626" stroke-width="0.3">100pF</text><text x="67.50" y="229.50" font-size="8.58" fill="#262626" font-weight="bold" textLength="8.69" lengthAdjust="spacingAndGlyphs" stroke="#262626" stroke-width="0.3">R8</text><text x="56.20" y="237.90" font-size="8.58" fill="#262626" font-weight="bold" textLength="18.30" lengthAdjust="spacingAndGlyphs" stroke="#262626" stroke-width="0.3">47kΩ</text><text x="103.30" y="234.40" font-size="8.58" fill="#262626" font-weight="bold" textLength="9.59" lengthAdjust="spacingAndGlyphs" stroke="#262626" stroke-width="0.3">R9</text><text x="103.30" y="242.60" font-size="8.58" fill="#262626" font-weight="bold" textLength="13.99" lengthAdjust="spacingAndGlyphs" stroke="#262626" stroke-width="0.3">2kΩ</text><text x="138.20" y="229.50" font-size="8.58" fill="#262626" font-weight="bold" textLength="9.09" lengthAdjust="spacingAndGlyphs" stroke="#262626" stroke-width="0.3">C6</text><text x="138.20" y="237.40" font-size="8.58" fill="#262626" font-weight="bold" textLength="20.90" lengthAdjust="spacingAndGlyphs" stroke="#262626" stroke-width="0.3">100µF</text><text x="265.00" y="126.20" font-size="8.58" fill="#262626" font-weight="bold" textLength="10.49" lengthAdjust="spacingAndGlyphs" stroke="#262626" stroke-width="0.3">U2</text><text x="232.20" y="151.30" font-size="8.58" fill="#262626" font-weight="bold" textLength="16.31" lengthAdjust="spacingAndGlyphs" stroke="#262626" stroke-width="0.3">6N2P</text><text x="265.80" y="150.80" font-size="8.58" fill="#262626" font-weight="bold" textLength="8.69" lengthAdjust="spacingAndGlyphs" stroke="#262626" stroke-width="0.3">C2</text><text x="261.00" y="172.40" font-size="8.58" fill="#262626" font-weight="bold" textLength="17.29" lengthAdjust="spacingAndGlyphs" stroke="#262626" stroke-width="0.3">22nF</text><text x="219.80" y="208.30" font-size="8.58" fill="#262626" font-weight="bold" textLength="8.59" lengthAdjust="spacingAndGlyphs" stroke="#262626" stroke-width="0.3">R3</text><text x="219.80" y="216.00" font-size="8.58" fill="#262626" font-weight="bold" textLength="17.20" lengthAdjust="spacingAndGlyphs" stroke="#262626" stroke-width="0.3">47kΩ</text><text x="291.90" y="31.40" font-size="8.58" fill="#262626" font-weight="bold" textLength="9.59" lengthAdjust="spacingAndGlyphs" stroke="#262626" stroke-width="0.3">R7</text><text x="290.00" y="47.70" font-size="8.58" fill="#262626" font-weight="bold" textLength="17.60" lengthAdjust="spacingAndGlyphs" stroke="#262626" stroke-width="0.3">10kΩ</text><text x="300.00" y="153.20" font-size="8.58" fill="#262626" font-weight="bold" textLength="11.98" lengthAdjust="spacingAndGlyphs" stroke="#262626" stroke-width="0.3">R6</text><text x="296.00" y="170.20" font-size="8.58" fill="#262626" font-weight="bold" textLength="22.01" lengthAdjust="spacingAndGlyphs" stroke="#262626" stroke-width="0.3">180kΩ</text><text x="320.00" y="188.70" font-size="8.58" fill="#262626" font-weight="bold" textLength="13.00" lengthAdjust="spacingAndGlyphs" stroke="#262626" stroke-width="0.3">R15</text><text x="309.00" y="196.70" font-size="8.58" fill="#262626" font-weight="bold" textLength="18.00" lengthAdjust="spacingAndGlyphs" stroke="#262626" stroke-width="0.3">27kΩ</text><text x="344.00" y="225.70" font-size="8.58" fill="#262626" font-weight="bold" textLength="7.99" lengthAdjust="spacingAndGlyphs" stroke="#262626" stroke-width="0.3">C4</text><text x="344.00" y="233.70" font-size="8.58" fill="#262626" font-weight="bold" textLength="15.99" lengthAdjust="spacingAndGlyphs" stroke="#262626" stroke-width="0.3">10nF</text><text x="375.00" y="189.70" font-size="8.58" fill="#262626" font-weight="bold" textLength="7.99" lengthAdjust="spacingAndGlyphs" stroke="#262626" stroke-width="0.3">C5</text><text x="375.00" y="197.20" font-size="8.58" fill="#262626" font-weight="bold" textLength="19.01" lengthAdjust="spacingAndGlyphs" stroke="#262626" stroke-width="0.3">3.9nF</text><text x="403.60" y="187.40" font-size="8.58" fill="#262626" font-weight="bold" textLength="13.40" lengthAdjust="spacingAndGlyphs" stroke="#262626" stroke-width="0.3">R13</text><text x="403.60" y="195.30" font-size="8.58" fill="#262626" font-weight="bold" textLength="22.01" lengthAdjust="spacingAndGlyphs" stroke="#262626" stroke-width="0.3">620kΩ</text><text x="414.20" y="213.70" font-size="8.58" fill="#262626" font-weight="bold" textLength="12.20" lengthAdjust="spacingAndGlyphs" stroke="#262626" stroke-width="0.3">R11</text><text x="403.60" y="221.50" font-size="8.58" fill="#262626" font-weight="bold" textLength="17.30" lengthAdjust="spacingAndGlyphs" stroke="#262626" stroke-width="0.3">220Ω</text><text x="459.00" y="213.70" font-size="8.58" fill="#262626" font-weight="bold" textLength="8.99" lengthAdjust="spacingAndGlyphs" stroke="#262626" stroke-width="0.3">C8</text><text x="459.00" y="222.00" font-size="8.58" fill="#262626" font-weight="bold" textLength="20.80" lengthAdjust="spacingAndGlyphs" stroke="#262626" stroke-width="0.3">100µF</text><text x="480.40" y="161.30" font-size="8.58" fill="#262626" font-weight="bold" textLength="8.59" lengthAdjust="spacingAndGlyphs" stroke="#262626" stroke-width="0.3">U3</text><text x="446.30" y="188.20" font-size="8.58" fill="#262626" font-weight="bold" textLength="22.48" lengthAdjust="spacingAndGlyphs" stroke="#262626" stroke-width="0.3">6N23P</text><text x="422.00" y="51.70" font-size="8.58" fill="#262626" font-weight="bold" textLength="15.00" lengthAdjust="spacingAndGlyphs" stroke="#262626" stroke-width="0.3">C10</text><text x="422.00" y="59.70" font-size="8.58" fill="#262626" font-weight="bold" textLength="22.00" lengthAdjust="spacingAndGlyphs" stroke="#262626" stroke-width="0.3">220µF</text><text x="461.80" y="119.60" font-size="8.58" fill="#262626" font-weight="bold" textLength="9.39" lengthAdjust="spacingAndGlyphs" stroke="#262626" stroke-width="0.3">U1</text><text x="455.50" y="127.40" font-size="8.58" fill="#262626" font-weight="bold" textLength="23.58" lengthAdjust="spacingAndGlyphs" stroke="#262626" stroke-width="0.3">6N23P</text><text x="497.60" y="113.30" font-size="8.58" fill="#262626" font-weight="bold" textLength="13.10" lengthAdjust="spacingAndGlyphs" stroke="#262626" stroke-width="0.3">R12</text><text x="497.60" y="121.20" font-size="8.58" fill="#262626" font-weight="bold" textLength="13.69" lengthAdjust="spacingAndGlyphs" stroke="#262626" stroke-width="0.3">1kΩ</text><text x="539.50" y="97.60" font-size="8.58" fill="#262626" font-weight="bold" textLength="8.49" lengthAdjust="spacingAndGlyphs" stroke="#262626" stroke-width="0.3">C3</text><text x="534.60" y="119.90" font-size="8.58" fill="#262626" font-weight="bold" textLength="18.62" lengthAdjust="spacingAndGlyphs" stroke="#262626" stroke-width="0.3">4.7µF</text><text x="558.80" y="31.70" font-size="8.58" fill="#262626" font-weight="bold" textLength="9.29" lengthAdjust="spacingAndGlyphs" stroke="#262626" stroke-width="0.3">R2</text><text x="556.40" y="47.70" font-size="8.58" fill="#262626" font-weight="bold" textLength="19.99" lengthAdjust="spacingAndGlyphs" stroke="#262626" stroke-width="0.3">1.5kΩ</text><text x="707.70" y="48.00" font-size="8.43" fill="#262626" font-weight="bold" textLength="8.29" lengthAdjust="spacingAndGlyphs" stroke="#262626" stroke-width="0.3">V1</text><text x="707.70" y="56.10" font-size="8.43" fill="#262626" font-weight="bold" textLength="19.69" lengthAdjust="spacingAndGlyphs" stroke="#262626" stroke-width="0.3">300 V</text><text x="566.70" y="182.20" font-size="8.58" fill="#262626" font-weight="bold" textLength="9.09" lengthAdjust="spacingAndGlyphs" stroke="#262626" stroke-width="0.3">R1</text><text x="566.70" y="190.00" font-size="8.58" fill="#262626" font-weight="bold" textLength="22.31" lengthAdjust="spacingAndGlyphs" stroke="#262626" stroke-width="0.3">620kΩ</text><text x="603.10" y="182.20" font-size="8.58" fill="#262626" font-weight="bold" textLength="20.89" lengthAdjust="spacingAndGlyphs" stroke="#262626" stroke-width="0.3">LOAD</text><text x="603.10" y="190.00" font-size="8.58" fill="#262626" font-weight="bold" textLength="17.70" lengthAdjust="spacingAndGlyphs" stroke="#262626" stroke-width="0.3">50kΩ</text><rect x="46.80" y="105.20" width="31.50" height="21.30" fill="#c6dcc2" stroke="#6a746a" stroke-width="1"/><rect x="49.50" y="109.50" width="8.20" height="6.20" fill="#dfe6de" stroke="#9aa89a" stroke-width="0.5"/><rect x="59.30" y="109.50" width="8.20" height="6.20" fill="#dfe6de" stroke="#9aa89a" stroke-width="0.5"/><rect x="69.00" y="109.50" width="8.20" height="6.20" fill="#dfe6de" stroke="#9aa89a" stroke-width="0.5"/><path d="M50.5,113.5 Q52.5,110.5 54,113 T57,112" stroke="#333" stroke-width="0.7" fill="none"/><path d="M60.5,113.5 L62.5,111 L64.5,113.5 L66.5,111" stroke="#333" stroke-width="0.7" fill="none"/><path d="M70,113.5 L71.5,113.5 L71.5,111 L73.5,111 L73.5,113.5 L75.5,113.5 L75.5,111 L76.5,111" stroke="#222" stroke-width="0.8" fill="none"/><circle cx="52.40" cy="122.80" r="1.60" fill="#c6dcc2" stroke="#304030" stroke-width="0.9"/><circle cx="62.80" cy="122.80" r="1.60" fill="#c6dcc2" stroke="#304030" stroke-width="0.9"/><circle cx="72.90" cy="122.80" r="1.60" fill="#c6dcc2" stroke="#304030" stroke-width="0.9"/><path d="M52.4,117 L52.4,120 M51,118.5 L53.8,118.5" stroke="#304030" stroke-width="0.6" fill="none"/><line x1="71.50" y1="118.50" x2="74.30" y2="118.50" stroke="#304030" stroke-width="0.6"/><text x="53.6" y="102.8" font-size="6.6" font-family="Liberation Mono, monospace" font-weight="bold" fill="#2a2a2a" stroke="#2a2a2a" stroke-width="0.3" textLength="17.4" lengthAdjust="spacingAndGlyphs">XFG1</text><rect x="620.70" y="105.30" width="30.30" height="15.50" fill="#c6dcc2" stroke="#6a746a" stroke-width="1"/><rect x="624.00" y="108.00" width="24.00" height="5.00" fill="#b8c4b6"/><circle cx="625.80" cy="117.40" r="1.40" fill="none" stroke="#405040" stroke-width="0.9"/><rect x="634.40" y="115.80" width="3.20" height="3.20" fill="none" stroke="#405040" stroke-width="0.8"/><rect x="639.40" y="115.80" width="3.20" height="3.20" fill="none" stroke="#405040" stroke-width="0.8"/><rect x="644.40" y="115.80" width="3.20" height="3.20" fill="none" stroke="#405040" stroke-width="0.8"/><text x="626.4" y="102.9" font-size="6.6" font-family="Liberation Mono, monospace" font-weight="bold" fill="#2a2a2a" stroke="#2a2a2a" stroke-width="0.3" textLength="17.8" lengthAdjust="spacingAndGlyphs">XDA1</text><rect x="552.30" y="279.30" width="57.60" height="41.90" fill="#c4dcc0" stroke="#555" stroke-width="1.1"/><rect x="554.90" y="281.00" width="35.40" height="25.80" fill="#bdbdbd"/><path d="M557.0,293.5 L558.0,291.6 L559.0,289.8 L560.0,288.2 L561.0,286.8 L562.0,285.7 L563.0,284.9 L564.0,284.5 L565.0,284.5 L566.0,284.9 L567.0,285.7 L568.0,286.8 L569.0,288.2 L570.0,289.8 L571.0,291.6 L572.0,293.5 L573.0,295.4 L574.0,297.2 L575.0,298.8 L576.0,300.2 L577.0,301.3 L578.0,302.1 L579.0,302.5 L580.0,302.5 L581.0,302.1 L582.0,301.3 L583.0,300.2 L584.0,298.8 L585.0,297.2 L586.0,295.4 L587.0,293.5" stroke="#202020" stroke-width="0.6" fill="none"/><path d="M557.0,293.5 L558.0,291.4 L559.0,289.4 L560.0,287.6 L561.0,286.1 L562.0,284.8 L563.0,284.0 L564.0,283.6 L565.0,283.6 L566.0,284.0 L567.0,284.8 L568.0,286.1 L569.0,287.6 L570.0,289.4 L571.0,291.4 L572.0,293.5 L573.0,295.6 L574.0,297.6 L575.0,299.4 L576.0,300.9 L577.0,302.2 L578.0,303.0 L579.0,303.4 L580.0,303.4 L581.0,303.0 L582.0,302.2 L583.0,300.9 L584.0,299.4 L585.0,297.6 L586.0,295.6 L587.0,293.5" stroke="#202020" stroke-width="0.6" fill="none"/><path d="M557.0,293.5 L558.0,291.2 L559.0,289.0 L560.0,287.0 L561.0,285.3 L562.0,284.0 L563.0,283.0 L564.0,282.6 L565.0,282.6 L566.0,283.0 L567.0,284.0 L568.0,285.3 L569.0,287.0 L570.0,289.0 L571.0,291.2 L572.0,293.5 L573.0,295.8 L574.0,298.0 L575.0,300.0 L576.0,301.7 L577.0,303.0 L578.0,304.0 L579.0,304.4 L580.0,304.4 L581.0,304.0 L582.0,303.0 L583.0,301.7 L584.0,300.0 L585.0,298.0 L586.0,295.8 L587.0,293.5" stroke="#202020" stroke-width="0.6" fill="none"/><path d="M557.0,293.5 L558.0,291.0 L559.0,288.6 L560.0,286.4 L561.0,284.6 L562.0,283.1 L563.0,282.1 L564.0,281.6 L565.0,281.6 L566.0,282.1 L567.0,283.1 L568.0,284.6 L569.0,286.4 L570.0,288.6 L571.0,291.0 L572.0,293.5 L573.0,296.0 L574.0,298.4 L575.0,300.6 L576.0,302.4 L577.0,303.9 L578.0,304.9 L579.0,305.4 L580.0,305.4 L581.0,304.9 L582.0,303.9 L583.0,302.4 L584.0,300.6 L585.0,298.4 L586.0,296.0 L587.0,293.5" stroke="#202020" stroke-width="0.6" fill="none"/><circle cx="562.40" cy="314.20" r="3.20" fill="#9a9a9a" stroke="#404040" stroke-width="0.9"/><circle cx="562.40" cy="314.20" r="1.20" fill="#c0c0c0"/><circle cx="573.00" cy="314.20" r="3.20" fill="#9a9a9a" stroke="#404040" stroke-width="0.9"/><circle cx="573.00" cy="314.20" r="1.20" fill="#c0c0c0"/><circle cx="583.50" cy="314.20" r="3.20" fill="#9a9a9a" stroke="#404040" stroke-width="0.9"/><circle cx="583.50" cy="314.20" r="1.20" fill="#c0c0c0"/><circle cx="594.20" cy="314.20" r="3.20" fill="#9a9a9a" stroke="#404040" stroke-width="0.9"/><circle cx="594.20" cy="314.20" r="1.20" fill="#c0c0c0"/><circle cx="602.60" cy="289.60" r="3.20" fill="#9a9a9a" stroke="#404040" stroke-width="0.9"/><path d="M605.50,289.50 L614.50,289.50" stroke="#3c3c3c" stroke-width="0.9" fill="none" stroke-linejoin="miter"/><circle cx="602.60" cy="300.20" r="3.20" fill="#9a9a9a" stroke="#404040" stroke-width="0.9"/><path d="M605.50,300.50 L614.50,300.50" stroke="#3c3c3c" stroke-width="0.9" fill="none" stroke-linejoin="miter"/><path d="M573.50,317.50 L573.50,326.50" stroke="#3c3c3c" stroke-width="0.9" fill="none" stroke-linejoin="miter"/><path d="M583.50,317.50 L583.50,326.50" stroke="#3c3c3c" stroke-width="0.9" fill="none" stroke-linejoin="miter"/><path d="M562.50,317.50 L562.50,331.50" stroke="#8a7a6a" stroke-width="0.9" fill="none" stroke-linejoin="miter"/><path d="M594.50,317.50 L594.50,331.50" stroke="#8a7a6a" stroke-width="0.9" fill="none" stroke-linejoin="miter"/><text x="574" y="276.8" font-size="6.8" font-family="Liberation Mono, monospace" font-weight="bold" fill="#2a2a2a" stroke="#2a2a2a" stroke-width="0.3" textLength="18.6" lengthAdjust="spacingAndGlyphs">XSC2</text><rect x="144.00" y="43.20" width="50.40" height="17.60" fill="#f9f6c2"/><text x="146.40" y="51.20" font-size="6.83" fill="#3a3a30" textLength="34.69" lengthAdjust="spacingAndGlyphs" stroke="#3a3a30" stroke-width="0.1">V(dc): 259 V</text><text x="146.40" y="58.40" font-size="6.83" fill="#3a3a30" textLength="37.57" lengthAdjust="spacingAndGlyphs" stroke="#3a3a30" stroke-width="0.1">I(dc): 480 uA</text><rect x="141.60" y="88.80" width="49.90" height="25.70" fill="#f9f6c2"/><text x="144.00" y="97.20" font-size="6.83" fill="#3a3a30" textLength="41.20" lengthAdjust="spacingAndGlyphs" stroke="#3a3a30" stroke-width="0.1">V(p-p): 728 mV</text><text x="144.00" y="104.00" font-size="6.83" fill="#3a3a30" textLength="32.99" lengthAdjust="spacingAndGlyphs" stroke="#3a3a30" stroke-width="0.1">V(dc): 101 V</text><text x="144.00" y="111.10" font-size="6.83" fill="#3a3a30" textLength="37.17" lengthAdjust="spacingAndGlyphs" stroke="#3a3a30" stroke-width="0.1">I(dc): 480 uA</text><rect x="112.00" y="190.60" width="50.60" height="16.90" fill="#f9f6c2"/><text x="114.60" y="198.80" font-size="6.83" fill="#3a3a30" textLength="39.71" lengthAdjust="spacingAndGlyphs" stroke="#3a3a30" stroke-width="0.1">V(dc): 959 mV</text><text x="114.60" y="205.80" font-size="6.83" fill="#3a3a30" textLength="37.57" lengthAdjust="spacingAndGlyphs" stroke="#3a3a30" stroke-width="0.1">I(dc): 480 uA</text><rect x="259.90" y="69.60" width="50.10" height="17.60" fill="#f9f6c2"/><text x="262.50" y="77.90" font-size="6.83" fill="#3a3a30" textLength="33.89" lengthAdjust="spacingAndGlyphs" stroke="#3a3a30" stroke-width="0.1">V(dc): 259 V</text><text x="262.50" y="84.80" font-size="6.83" fill="#3a3a30" textLength="40.57" lengthAdjust="spacingAndGlyphs" stroke="#3a3a30" stroke-width="0.1">I(dc): 2.16 mA</text><rect x="351.60" y="54.40" width="48.80" height="18.40" fill="#f9f6c2"/><text x="353.20" y="61.90" font-size="6.83" fill="#3a3a30" textLength="34.09" lengthAdjust="spacingAndGlyphs" stroke="#3a3a30" stroke-width="0.1">V(dc): 286 V</text><text x="353.20" y="69.10" font-size="6.83" fill="#3a3a30" textLength="42.69" lengthAdjust="spacingAndGlyphs" stroke="#3a3a30" stroke-width="0.1">I(dc): -2.71 mA</text><rect x="478.50" y="42.00" width="49.20" height="17.80" fill="#f9f6c2"/><text x="480.60" y="49.30" font-size="6.83" fill="#3a3a30" textLength="33.39" lengthAdjust="spacingAndGlyphs" stroke="#3a3a30" stroke-width="0.1">V(dc): 286 V</text><text x="480.60" y="56.00" font-size="6.83" fill="#3a3a30" textLength="40.37" lengthAdjust="spacingAndGlyphs" stroke="#3a3a30" stroke-width="0.1">I(dc): 6.49 mA</text><rect x="517.90" y="72.50" width="49.70" height="15.10" fill="#f9f6c2"/><text x="519.80" y="79.10" font-size="6.83" fill="#3a3a30" textLength="40.00" lengthAdjust="spacingAndGlyphs" stroke="#3a3a30" stroke-width="0.1">V(p-p): 1.95 V</text><text x="519.80" y="85.60" font-size="6.83" fill="#3a3a30" textLength="36.71" lengthAdjust="spacingAndGlyphs" stroke="#3a3a30" stroke-width="0.1">V(dc): 76.1 V</text><rect x="571.60" y="86.40" width="50.40" height="12.80" fill="#f9f6c2"/><text x="574.50" y="94.40" font-size="6.83" fill="#3a3a30" textLength="39.50" lengthAdjust="spacingAndGlyphs" stroke="#3a3a30" stroke-width="0.1">V(p-p): 1.95 V</text><rect x="627.60" y="51.20" width="50.40" height="20.00" fill="#f9f6c2"/><text x="630.50" y="59.70" font-size="6.83" fill="#3a3a30" textLength="34.69" lengthAdjust="spacingAndGlyphs" stroke="#3a3a30" stroke-width="0.1">V(dc): 300 V</text><text x="630.50" y="66.90" font-size="6.83" fill="#3a3a30" textLength="43.49" lengthAdjust="spacingAndGlyphs" stroke="#3a3a30" stroke-width="0.1">I(dc): -9.21 mA</text><rect x="384.60" y="133.80" width="49.60" height="17.60" fill="#f9f6c2"/><text x="387.00" y="141.80" font-size="6.83" fill="#3a3a30" textLength="36.41" lengthAdjust="spacingAndGlyphs" stroke="#3a3a30" stroke-width="0.1">V(dc): 1.43 V</text><text x="387.00" y="148.80" font-size="6.83" fill="#3a3a30" textLength="40.77" lengthAdjust="spacingAndGlyphs" stroke="#3a3a30" stroke-width="0.1">I(dc): 6.49 mA</text><rect x="253.30" y="187.00" width="45.10" height="24.00" fill="#f9f6c2"/><text x="254.90" y="194.10" font-size="6.83" fill="#3a3a30" textLength="41.60" lengthAdjust="spacingAndGlyphs" stroke="#3a3a30" stroke-width="0.1">V(p-p): 712 mV</text><text x="254.90" y="201.00" font-size="6.83" fill="#3a3a30" textLength="31.09" lengthAdjust="spacingAndGlyphs" stroke="#3a3a30" stroke-width="0.1">V(dc): 101 V</text><text x="254.90" y="208.10" font-size="6.83" fill="#3a3a30" textLength="40.67" lengthAdjust="spacingAndGlyphs" stroke="#3a3a30" stroke-width="0.1">I(dc): 2.16 mA</text><g style="mix-blend-mode:multiply"><path d="M292.7,141.3 C299,140.3 308,140.3 315,140.8 C317.5,144 318,148 318,151 C320,153 323,155 325,157 C323,163 321,167 320,170 C318,175 316.5,180 315,188 C313.5,195 312,202 311,215 L303,215 C302,207 301.5,199 301.8,193.7 C302,189 303.5,183 307.3,176.9 C308.5,174.5 309.4,173 309.4,172.7 C305,172.5 300,172.3 296,169 C293,165 292.7,158 292.7,152 Z" stroke="none" stroke-width="1" fill="#f2ec10"/><path d="M319,158 C323,153 332,150.5 345,150 C362,149.5 380,151 391,157 C400,164 403,176 402.5,191 C402,206 394,221 386,233 C377,246 368,259 355,265.5 C343,270.5 330,270 320,264.5 C313,259 311,250 311.5,238 C312,225 312,212 311.5,203" stroke="#f2ec10" stroke-width="6.3" fill="none" stroke-linecap="round" stroke-linejoin="round"/><path d="M350.5,88 C347,98 338,110 329,121 C325,126 322,131 320.5,135" stroke="#f2ec10" stroke-width="5.8" fill="none" stroke-linecap="round"/><path d="M321.5,110 C320,118 319.5,127 319.5,136.5 L342.5,125.5" stroke="#f2ec10" stroke-width="5.8" fill="none" stroke-linecap="round" stroke-linejoin="round"/></g><rect x="0.00" y="504.00" width="1000.00" height="69.00" fill="#f0f0f0"/><line x1="126.00" y1="508.50" x2="1000.00" y2="508.50" stroke="#a8a8a8" stroke-width="1"/><rect x="0.00" y="508.00" width="126.00" height="13.00" fill="#fff"/><path d="M0 521.5 L125.5 521.5 L125.5 508" stroke="#8a8a8a" stroke-width="1" fill="none"/><rect x="1.50" y="510.50" width="7.50" height="8.50" fill="#f4eeee" stroke="#6a5050" stroke-width="0.9"/><rect x="2.50" y="512.00" width="3.50" height="5.00" fill="#a07070"/><rect x="5.50" y="509.50" width="3.00" height="3.00" fill="#fff" stroke="#6a5050" stroke-width="0.7"/><text x="13.00" y="518.00" font-size="8.14" fill="#222" textLength="109.99" lengthAdjust="spacingAndGlyphs">330k+2.7k (6н2п прямая связь) *</text><line x1="0.00" y1="523.50" x2="1000.00" y2="523.50" stroke="#a8a8a8" stroke-width="1"/><rect x="0.00" y="528.00" width="1000.00" height="27.00" fill="#fff"/><line x1="0.00" y1="528.50" x2="1000.00" y2="528.50" stroke="#a8a8a8" stroke-width="1"/><line x1="0.00" y1="554.50" x2="1000.00" y2="554.50" stroke="#a8a8a8" stroke-width="1"/><text x="0.00" y="538.50" font-size="7.85" fill="#222" textLength="237.00" lengthAdjust="spacingAndGlyphs">нений SPICE для 330k+2.7k (6н2п прямая связь) - 2024-05-12 20:30:11 ------</text><text x="0.00" y="549.50" font-size="7.85" fill="#222" textLength="640.99" lengthAdjust="spacingAndGlyphs">редупреждение по обозначению 'u2, u4', элемент 'e1':  Use of log() is ambiguous, simulation will treat this as ln() in this case.  Please see the "Mathematical Expressions" section in the Multisim SPICE manual</text><path d="M0 556 L6 556 L6 568" stroke="#8a8a8a" stroke-width="1" fill="none"/><path d="M5.5,567 L5.5,556.5 L38.5,556.5 L38.5,567" stroke="#a0a0a0" stroke-width="1" fill="none"/><line x1="5.00" y1="566.50" x2="40.00" y2="566.50" stroke="#8a8a8a" stroke-width="1"/><text x="9.50" y="564.50" font-size="7.85" fill="#222" textLength="27.00" lengthAdjust="spacingAndGlyphs">Слои PCB</text><rect x="40.00" y="555.00" width="56.00" height="12.50" fill="#fff"/><path d="M40.5 555 L40.5 567.5 L95.5 567.5 L95.5 555" stroke="#8a8a8a" stroke-width="1" fill="none"/><text x="43.60" y="564.50" font-size="7.56" fill="#222" textLength="46.79" lengthAdjust="spacingAndGlyphs">Моделирование</text><rect x="651.40" y="161.00" width="189.80" height="134.40" fill="none" stroke="rgba(0,0,0,0.04)" stroke-width="1"/><rect x="652.40" y="162.00" width="187.80" height="132.40" fill="none" stroke="rgba(0,0,0,0.06)" stroke-width="1"/><rect x="653.40" y="163.00" width="185.80" height="130.40" fill="none" stroke="rgba(0,0,0,0.09)" stroke-width="1"/><rect x="654.40" y="163.00" width="183.80" height="128.40" fill="#f0f0f0" stroke="#a9a9a9" stroke-width="1"/><rect x="654.90" y="163.50" width="182.80" height="17.50" fill="#fff"/><rect x="654.90" y="181.00" width="182.80" height="30.00" fill="#f4f4f4"/><path d="M659 171.5 L664 169 L669 171 L664 174 Z" stroke="none" stroke-width="1" fill="#4b4f86"/><path d="M659 171.5 L664 174 L664 175 L659 172.5 Z" stroke="none" stroke-width="1" fill="#30346a"/><text x="671.40" y="174.10" font-size="7.56" fill="#a4a4a4" textLength="138.30" lengthAdjust="spacingAndGlyphs">Измеритель нелинейных искажений-XDA1</text><path d="M826.4 168.9 L832.5 174.9 M832.5 168.9 L826.4 174.9" stroke="#999" stroke-width="0.9" fill="none"/><text x="691.00" y="188.00" font-size="7.70" fill="#222" textLength="109.29" lengthAdjust="spacingAndGlyphs">Общие нелинейные искажения(THD)</text><rect x="657.00" y="192.20" width="177.60" height="16.00" fill="#000" stroke="#8a8a8a" stroke-width="0.7"/><path d="M657,209.2 L835.6,209.2 L835.6,192" stroke="#d8d8d8" stroke-width="1" fill="none"/><text x="734.80" y="203.70" font-size="11.48" fill="#fff" textLength="33.99" lengthAdjust="spacingAndGlyphs">0.060 %</text><line x1="655.40" y1="210.70" x2="837.20" y2="210.70" stroke="#c4c4c4" stroke-width="1"/><path d="M688.9 262.6 L688.9 214.5 L836 214.5" stroke="#e2e2e2" stroke-width="1" fill="none"/><line x1="688.90" y1="262.60" x2="836.00" y2="262.60" stroke="#fafafa" stroke-width="1"/><rect x="659.40" y="222.50" width="23.30" height="12.90" fill="#cce4f7" stroke="#6aaee6" stroke-width="1"/><text x="661.50" y="231.20" font-size="7.27" fill="#222" textLength="19.12" lengthAdjust="spacingAndGlyphs">Старт</text><rect x="659.40" y="241.60" width="23.30" height="13.20" fill="#e1e1e1" stroke="#b4b4b4" stroke-width="1"/><text x="664.00" y="250.80" font-size="7.27" fill="#222" textLength="14.01" lengthAdjust="spacingAndGlyphs">Стоп</text><text x="692.40" y="228.60" font-size="7.27" fill="#222" textLength="56.29" lengthAdjust="spacingAndGlyphs">Основная частота.</text><rect x="755.70" y="221.20" width="48.80" height="10.00" fill="#f0f0f0" stroke="#d8d8d8" stroke-width="1"/><rect x="805.50" y="221.20" width="24.60" height="10.00" fill="#f0f0f0" stroke="#d8d8d8" stroke-width="1"/><text x="779.00" y="229.00" font-size="7.27" fill="#777" textLength="2.41" lengthAdjust="spacingAndGlyphs">1</text><text x="807.00" y="228.50" font-size="7.27" fill="#999" textLength="11.01" lengthAdjust="spacingAndGlyphs">kHz</text><text x="710.70" y="246.40" font-size="7.27" fill="#222" textLength="37.99" lengthAdjust="spacingAndGlyphs">Разрешение.</text><rect x="755.20" y="237.70" width="75.40" height="12.30" fill="#cccccc"/><text x="757.70" y="246.50" font-size="7.27" fill="#a0a0a0" textLength="18.39" lengthAdjust="spacingAndGlyphs">100 Hz</text><path d="M823 242.5 L825.5 245 L828 242.5" stroke="#b0b0b0" stroke-width="0.8" fill="none"/><rect x="755.70" y="251.30" width="74.40" height="10.00" fill="#fff" stroke="#d8d8d8" stroke-width="1"/><text x="783.80" y="257.80" font-size="7.27" fill="#333" textLength="18.39" lengthAdjust="spacingAndGlyphs">100 Hz</text><rect x="660.50" y="269.50" width="109.00" height="20.00" fill="none" stroke="#e4e4e4" stroke-width="1"/><rect x="767.50" y="269.50" width="38.00" height="20.00" fill="none" stroke="#e4e4e4" stroke-width="1"/><rect x="661.00" y="266.00" width="38.00" height="6.00" fill="#f0f0f0"/><rect x="771.00" y="266.00" width="21.00" height="6.00" fill="#f0f0f0"/><text x="662.30" y="273.00" font-size="7.27" fill="#222" textLength="35.29" lengthAdjust="spacingAndGlyphs">Управление</text><rect x="662.80" y="275.70" width="31.70" height="9.40" fill="#cce4f7" stroke="#6aaee6" stroke-width="1"/><text x="673.50" y="283.00" font-size="7.27" fill="#222" textLength="11.00" lengthAdjust="spacingAndGlyphs">THD</text><rect x="698.10" y="275.70" width="31.00" height="9.40" fill="#e1e1e1" stroke="#cfcfcf" stroke-width="1"/><text x="705.00" y="283.00" font-size="7.27" fill="#222" textLength="17.51" lengthAdjust="spacingAndGlyphs">SINAD</text><rect x="733.50" y="275.70" width="30.40" height="9.40" fill="#e3e3e3" stroke="#d8d8d8" stroke-width="1"/><text x="739.00" y="283.00" font-size="7.27" fill="#b8b8b8" textLength="17.99" lengthAdjust="spacingAndGlyphs">Уст...</text><text x="772.20" y="273.00" font-size="7.27" fill="#222" textLength="18.41" lengthAdjust="spacingAndGlyphs">Экран</text><rect x="769.50" y="275.70" width="14.00" height="9.40" fill="#cce4f7" stroke="#6aaee6" stroke-width="1"/><text x="775.00" y="283.00" font-size="7.27" fill="#222" textLength="5.00" lengthAdjust="spacingAndGlyphs">%</text><rect x="787.10" y="275.70" width="14.20" height="9.40" fill="#e1e1e1" stroke="#cfcfcf" stroke-width="1"/><text x="790.50" y="283.00" font-size="7.27" fill="#222" textLength="6.99" lengthAdjust="spacingAndGlyphs">dB</text><text x="814.00" y="283.50" font-size="6.98" fill="#444" textLength="7.20" lengthAdjust="spacingAndGlyphs">Вх</text><circle cx="825.50" cy="281.50" r="3.00" fill="#fff" stroke="#c8c8c8" stroke-width="0.8"/><circle cx="825.50" cy="281.50" r="1.20" fill="#d0d0d0"/><rect x="834.00" y="289.00" width="1.00" height="1.00" fill="#999"/><rect x="832.00" y="289.00" width="1.00" height="1.00" fill="#999"/><rect x="830.00" y="289.00" width="1.00" height="1.00" fill="#999"/><rect x="38.00" y="339.00" width="137.70" height="144.00" fill="none" stroke="rgba(0,0,0,0.04)" stroke-width="1"/><rect x="39.00" y="340.00" width="135.70" height="142.00" fill="none" stroke="rgba(0,0,0,0.06)" stroke-width="1"/><rect x="40.00" y="341.00" width="133.70" height="140.00" fill="none" stroke="rgba(0,0,0,0.09)" stroke-width="1"/><rect x="41.00" y="341.00" width="131.70" height="138.00" fill="#f0f0f0" stroke="#b0b0b0" stroke-width="1"/><rect x="41.50" y="341.50" width="130.70" height="16.50" fill="#fff"/><path d="M46.2 349.5 L51.2 347 L56.2 349 L51.2 352 Z" stroke="none" stroke-width="1" fill="#4b4f86"/><path d="M46.2 349.5 L51.2 352 L51.2 353 L46.2 350.5 Z" stroke="none" stroke-width="1" fill="#30346a"/><text x="58.80" y="351.50" font-size="7.27" fill="#a4a4a4" textLength="92.91" lengthAdjust="spacingAndGlyphs">Функциональный генерато...</text><path d="M160 347 L166 353 M166 347 L160 353" stroke="#999" stroke-width="0.9" fill="none"/><text x="48.30" y="365.30" font-size="7.27" fill="#222" textLength="44.47" lengthAdjust="spacingAndGlyphs">Форма сигнала</text><rect x="49.60" y="369.00" width="36.70" height="9.40" fill="#cce4f7" stroke="#5aa0d8" stroke-width="0.9"/><rect x="88.10" y="369.00" width="37.40" height="9.40" fill="#e1e1e1" stroke="#c8c8c8" stroke-width="0.9"/><rect x="128.20" y="369.00" width="37.40" height="9.40" fill="#e1e1e1" stroke="#c8c8c8" stroke-width="0.9"/><path d="M56.0,373.8 L56.6,373.5 L57.2,373.2 L57.8,373.0 L58.4,372.7 L59.0,372.5 L59.6,372.3 L60.2,372.2 L60.8,372.1 L61.4,372.0 L62.0,372.0 L62.6,372.0 L63.2,372.1 L63.8,372.2 L64.4,372.3 L65.0,372.5 L65.6,372.7 L66.2,373.0 L66.8,373.2 L67.4,373.5 L68.0,373.8 L68.6,374.1 L69.2,374.4 L69.8,374.6 L70.4,374.9 L71.0,375.1 L71.6,375.3 L72.2,375.4 L72.8,375.5 L73.4,375.6 L74.0,375.6 L74.6,375.6 L75.2,375.5 L75.8,375.4 L76.4,375.3 L77.0,375.1 L77.6,374.9 L78.2,374.6 L78.8,374.4 L79.4,374.1 L80.0,373.8" stroke="#223" stroke-width="0.7" fill="none"/><path d="M95 375.5 L99 372 L103.5 375.5 L108 372 L112.5 375.5 L117 372.5 L119 374" stroke="#334" stroke-width="0.7" fill="none"/><path d="M134 375.8 L139.5 375.8 L139.5 371.8 L145.5 371.8 L145.5 375.8 L151 375.8 L151 371.8 L156.5 371.8 L156.5 375.8 L160.5 375.8" stroke="#222" stroke-width="0.8" fill="none"/><text x="48.30" y="387.00" font-size="7.27" fill="#222" textLength="58.37" lengthAdjust="spacingAndGlyphs">Параметры сигнала</text><text x="50.40" y="397.50" font-size="7.27" fill="#222" textLength="24.08" lengthAdjust="spacingAndGlyphs">Частота</text><rect x="98.00" y="390.20" width="42.00" height="10.30" fill="#fff" stroke="#7a7a7a" stroke-width="1"/><rect x="140.50" y="390.20" width="25.60" height="10.30" fill="#fff" stroke="#7a7a7a" stroke-width="1"/><text x="100.50" y="397.50" font-size="7.27" fill="#111" textLength="2.00" lengthAdjust="spacingAndGlyphs">1</text><text x="143.00" y="397.50" font-size="7.27" fill="#111" textLength="10.61" lengthAdjust="spacingAndGlyphs">kHz</text><text x="50.40" y="409.00" font-size="7.27" fill="#222" textLength="43.01" lengthAdjust="spacingAndGlyphs">Длительность</text><text x="101.20" y="409.00" font-size="7.27" fill="#a8a8a8" textLength="6.81" lengthAdjust="spacingAndGlyphs">50</text><text x="145.00" y="409.00" font-size="7.27" fill="#a8a8a8" textLength="5.99" lengthAdjust="spacingAndGlyphs">%</text><text x="50.40" y="420.30" font-size="7.27" fill="#222" textLength="31.96" lengthAdjust="spacingAndGlyphs">Амплитуда</text><rect x="98.00" y="413.00" width="42.00" height="10.20" fill="#fff" stroke="#7a7a7a" stroke-width="1"/><rect x="140.50" y="413.00" width="25.60" height="10.20" fill="#fff" stroke="#7a7a7a" stroke-width="1"/><text x="100.50" y="420.30" font-size="7.27" fill="#111" textLength="2.81" lengthAdjust="spacingAndGlyphs">5</text><text x="143.00" y="420.30" font-size="7.27" fill="#111" textLength="13.01" lengthAdjust="spacingAndGlyphs">mVp</text><text x="50.40" y="432.00" font-size="7.27" fill="#222" textLength="29.30" lengthAdjust="spacingAndGlyphs">Смещение</text><rect x="98.00" y="424.20" width="42.00" height="10.80" fill="#fff" stroke="#7a7a7a" stroke-width="1"/><rect x="140.50" y="424.20" width="25.60" height="10.80" fill="#fff" stroke="#7a7a7a" stroke-width="1"/><text x="100.50" y="432.00" font-size="7.27" fill="#111" textLength="2.81" lengthAdjust="spacingAndGlyphs">0</text><text x="143.00" y="432.00" font-size="7.27" fill="#111" textLength="4.51" lengthAdjust="spacingAndGlyphs">V</text><rect x="67.00" y="439.40" width="75.50" height="11.60" fill="#cccccc"/><text x="86.30" y="447.80" font-size="6.98" fill="#a4a4a4" textLength="35.69" lengthAdjust="spacingAndGlyphs">Фронт/Спад</text><line x1="42.00" y1="453.00" x2="172.00" y2="453.00" stroke="#e2e2e2" stroke-width="1"/><path d="M55 461.5 L59 461.5 M57 459.5 L57 463.5" stroke="#444" stroke-width="0.7" fill="none"/><text x="89.70" y="463.50" font-size="7.27" fill="#222" textLength="20.10" lengthAdjust="spacingAndGlyphs">Общий</text><line x1="153.50" y1="461.80" x2="157.50" y2="461.80" stroke="#444" stroke-width="0.8"/><circle cx="57.00" cy="470.00" r="3.20" fill="#fff" stroke="#c8c8c8" stroke-width="0.8"/><circle cx="57.00" cy="470.00" r="1.20" fill="#ccc"/><circle cx="98.00" cy="470.00" r="3.20" fill="#fff" stroke="#c8c8c8" stroke-width="0.8"/><circle cx="98.00" cy="470.00" r="1.20" fill="#ccc"/><circle cx="155.50" cy="471.00" r="4.30" fill="#fff" stroke="#c0c0c0" stroke-width="0.8"/><rect x="635.50" y="298.00" width="366.50" height="272.00" fill="none" stroke="rgba(0,0,0,0.04)" stroke-width="1"/><rect x="636.50" y="299.00" width="364.50" height="270.00" fill="none" stroke="rgba(0,0,0,0.06)" stroke-width="1"/><rect x="637.50" y="300.00" width="362.50" height="268.00" fill="none" stroke="rgba(0,0,0,0.09)" stroke-width="1"/><rect x="638.50" y="300.00" width="360.50" height="266.00" fill="#f0f0f0" stroke="#9c9c9c" stroke-width="1"/><rect x="639.00" y="300.50" width="359.50" height="18.00" fill="#fff"/><path d="M644.3 308.2 L649.3 305.7 L654.3 307.7 L649.3 310.7 Z" stroke="none" stroke-width="1" fill="#4b4f86"/><path d="M644.3 308.2 L649.3 310.7 L649.3 311.7 L644.3 309.2 Z" stroke="none" stroke-width="1" fill="#30346a"/><text x="656.20" y="312.00" font-size="8.58" fill="#111" textLength="110.70" lengthAdjust="spacingAndGlyphs">4-х канальный осциллограф-XSC2</text><path d="M987.5 305.5 L993.5 311.5 M993.5 305.5 L987.5 311.5" stroke="#333" stroke-width="1" fill="none"/><rect x="641.00" y="318.50" width="356.50" height="144.50" fill="#000"/><line x1="680.83" y1="324.60" x2="680.83" y2="458.40" stroke="#d0d0d0" stroke-width="1" stroke-dasharray="2 2"/><line x1="715.46" y1="324.60" x2="715.46" y2="458.40" stroke="#d0d0d0" stroke-width="1" stroke-dasharray="2 2"/><line x1="750.09" y1="324.60" x2="750.09" y2="458.40" stroke="#d0d0d0" stroke-width="1" stroke-dasharray="2 2"/><line x1="784.72" y1="324.60" x2="784.72" y2="458.40" stroke="#d0d0d0" stroke-width="1" stroke-dasharray="2 2"/><line x1="819.35" y1="324.60" x2="819.35" y2="458.40" stroke="#d0d0d0" stroke-width="1" stroke-dasharray="2 2"/><line x1="853.98" y1="324.60" x2="853.98" y2="458.40" stroke="#d0d0d0" stroke-width="1" stroke-dasharray="2 2"/><line x1="888.61" y1="324.60" x2="888.61" y2="458.40" stroke="#d0d0d0" stroke-width="1" stroke-dasharray="2 2"/><line x1="923.24" y1="324.60" x2="923.24" y2="458.40" stroke="#d0d0d0" stroke-width="1" stroke-dasharray="2 2"/><line x1="957.87" y1="324.60" x2="957.87" y2="458.40" stroke="#d0d0d0" stroke-width="1" stroke-dasharray="2 2"/><line x1="646.20" y1="346.90" x2="992.50" y2="346.90" stroke="#d0d0d0" stroke-width="1" stroke-dasharray="2 2"/><line x1="646.20" y1="369.20" x2="992.50" y2="369.20" stroke="#d0d0d0" stroke-width="1" stroke-dasharray="2 2"/><line x1="646.20" y1="413.80" x2="992.50" y2="413.80" stroke="#d0d0d0" stroke-width="1" stroke-dasharray="2 2"/><line x1="646.20" y1="436.10" x2="992.50" y2="436.10" stroke="#d0d0d0" stroke-width="1" stroke-dasharray="2 2"/><line x1="646.20" y1="391.50" x2="992.50" y2="391.50" stroke="#f4f4f4" stroke-width="1.3"/><line x1="646.20" y1="324.60" x2="992.50" y2="324.60" stroke="#e4e4e4" stroke-width="1.1"/><line x1="646.20" y1="458.40" x2="992.50" y2="458.40" stroke="#e4e4e4" stroke-width="1.1"/><path d="M646.2,412.24 L646.8,411.78 L647.4,411.25 L648.0,410.67 L648.6,410.04 L649.2,409.34 L649.8,408.59 L650.4,407.78 L651.0,406.92 L651.6,406.01 L652.2,405.04 L652.8,404.02 L653.4,402.95 L654.0,401.84 L654.6,400.69 L655.2,399.50 L655.8,398.27 L656.4,397.02 L657.0,395.75 L657.6,394.45 L658.2,393.14 L658.8,391.83 L659.4,390.51 L660.0,389.20 L660.6,387.90 L661.2,386.61 L661.8,385.35 L662.4,384.11 L663.0,382.90 L663.6,381.73 L664.2,380.60 L664.8,379.51 L665.4,378.47 L666.0,377.47 L666.6,376.53 L667.2,375.64 L667.8,374.80 L668.4,374.03 L669.0,373.30 L669.6,372.64 L670.2,372.03 L670.8,371.48 L671.4,370.99 L672.0,370.55 L672.6,370.17 L673.2,369.85 L673.8,369.59 L674.4,369.38 L675.0,369.23 L675.6,369.14 L676.2,369.10 L676.8,369.12 L677.4,369.19 L678.0,369.33 L678.6,369.51 L679.2,369.76 L679.8,370.06 L680.4,370.42 L681.0,370.83 L681.6,371.31 L682.2,371.84 L682.8,372.43 L683.4,373.07 L684.0,373.78 L684.6,374.54 L685.2,375.36 L685.8,376.23 L686.4,377.15 L687.0,378.13 L687.6,379.16 L688.2,380.23 L688.8,381.35 L689.4,382.51 L690.0,383.70 L690.6,384.93 L691.2,386.19 L691.8,387.47 L692.4,388.77 L693.0,390.07 L693.6,391.39 L694.2,392.71 L694.8,394.02 L695.4,395.32 L696.0,396.60 L696.6,397.86 L697.2,399.09 L697.8,400.29 L698.4,401.46 L699.0,402.59 L699.6,403.67 L700.2,404.70 L700.8,405.69 L701.4,406.62 L702.0,407.50 L702.6,408.33 L703.2,409.10 L703.8,409.81 L704.4,410.47 L705.0,411.07 L705.6,411.61 L706.2,412.09 L706.8,412.52 L707.4,412.88 L708.0,413.20 L708.6,413.45 L709.2,413.65 L709.8,413.79 L710.4,413.87 L711.0,413.90 L711.6,413.87 L712.2,413.79 L712.8,413.65 L713.4,413.45 L714.0,413.20 L714.6,412.88 L715.2,412.52 L715.8,412.09 L716.4,411.61 L717.0,411.07 L717.6,410.47 L718.2,409.81 L718.8,409.10 L719.4,408.33 L720.0,407.50 L720.6,406.62 L721.2,405.69 L721.8,404.70 L722.4,403.67 L723.0,402.59 L723.6,401.46 L724.2,400.29 L724.8,399.09 L725.4,397.86 L726.0,396.60 L726.6,395.32 L727.2,394.02 L727.8,392.71 L728.4,391.39 L729.0,390.07 L729.6,388.77 L730.2,387.47 L730.8,386.19 L731.4,384.93 L732.0,383.70 L732.6,382.51 L733.2,381.35 L733.8,380.23 L734.4,379.16 L735.0,378.13 L735.6,377.15 L736.2,376.23 L736.8,375.36 L737.4,374.54 L738.0,373.78 L738.6,373.07 L739.2,372.43 L739.8,371.84 L740.4,371.31 L741.0,370.83 L741.6,370.42 L742.2,370.06 L742.8,369.76 L743.4,369.51 L744.0,369.33 L744.6,369.19 L745.2,369.12 L745.8,369.10 L746.4,369.14 L747.0,369.23 L747.6,369.38 L748.2,369.59 L748.8,369.85 L749.4,370.17 L750.0,370.55 L750.6,370.99 L751.2,371.48 L751.8,372.03 L752.4,372.64 L753.0,373.30 L753.6,374.03 L754.2,374.80 L754.8,375.64 L755.4,376.53 L756.0,377.47 L756.6,378.47 L757.2,379.51 L757.8,380.60 L758.4,381.73 L759.0,382.90 L759.6,384.11 L760.2,385.35 L760.8,386.61 L761.4,387.90 L762.0,389.20 L762.6,390.51 L763.2,391.83 L763.8,393.14 L764.4,394.45 L765.0,395.75 L765.6,397.02 L766.2,398.27 L766.8,399.50 L767.4,400.69 L768.0,401.84 L768.6,402.95 L769.2,404.02 L769.8,405.04 L770.4,406.01 L771.0,406.92 L771.6,407.78 L772.2,408.59 L772.8,409.34 L773.4,410.04 L774.0,410.67 L774.6,411.25 L775.2,411.78 L775.8,412.24 L776.4,412.65 L777.0,412.99 L777.6,413.29 L778.2,413.52 L778.8,413.70 L779.4,413.82 L780.0,413.89 L780.6,413.90 L781.2,413.85 L781.8,413.75 L782.4,413.59 L783.0,413.37 L783.6,413.10 L784.2,412.77 L784.8,412.38 L785.4,411.94 L786.0,411.43 L786.6,410.87 L787.2,410.26 L787.8,409.58 L788.4,408.85 L789.0,408.06 L789.6,407.22 L790.2,406.32 L790.8,405.37 L791.4,404.36 L792.0,403.31 L792.6,402.22 L793.2,401.08 L793.8,399.90 L794.4,398.69 L795.0,397.44 L795.6,396.17 L796.2,394.88 L796.8,393.58 L797.4,392.27 L798.0,390.95 L798.6,389.64 L799.2,388.33 L799.8,387.04 L800.4,385.77 L801.0,384.52 L801.6,383.30 L802.2,382.12 L802.8,380.97 L803.4,379.87 L804.0,378.81 L804.6,377.80 L805.2,376.84 L805.8,375.93 L806.4,375.08 L807.0,374.28 L807.6,373.54 L808.2,372.85 L808.8,372.23 L809.4,371.66 L810.0,371.14 L810.6,370.69 L811.2,370.29 L811.8,369.95 L812.4,369.67 L813.0,369.44 L813.6,369.28 L814.2,369.16 L814.8,369.11 L815.4,369.11 L816.0,369.16 L816.6,369.28 L817.2,369.44 L817.8,369.67 L818.4,369.95 L819.0,370.29 L819.6,370.69 L820.2,371.14 L820.8,371.66 L821.4,372.23 L822.0,372.85 L822.6,373.54 L823.2,374.28 L823.8,375.08 L824.4,375.93 L825.0,376.84 L825.6,377.80 L826.2,378.81 L826.8,379.87 L827.4,380.97 L828.0,382.12 L828.6,383.30 L829.2,384.52 L829.8,385.77 L830.4,387.04 L831.0,388.33 L831.6,389.64 L832.2,390.95 L832.8,392.27 L833.4,393.58 L834.0,394.88 L834.6,396.17 L835.2,397.44 L835.8,398.69 L836.4,399.90 L837.0,401.08 L837.6,402.22 L838.2,403.31 L838.8,404.36 L839.4,405.37 L840.0,406.32 L840.6,407.22 L841.2,408.06 L841.8,408.85 L842.4,409.58 L843.0,410.26 L843.6,410.87 L844.2,411.43 L844.8,411.94 L845.4,412.38 L846.0,412.77 L846.6,413.10 L847.2,413.37 L847.8,413.59 L848.4,413.75 L849.0,413.85 L849.6,413.90 L850.2,413.89 L850.8,413.82 L851.4,413.70 L852.0,413.52 L852.6,413.29 L853.2,412.99 L853.8,412.65 L854.4,412.24 L855.0,411.78 L855.6,411.25 L856.2,410.67 L856.8,410.04 L857.4,409.34 L858.0,408.59 L858.6,407.78 L859.2,406.92 L859.8,406.01 L860.4,405.04 L861.0,404.02 L861.6,402.95 L862.2,401.84 L862.8,400.69 L863.4,399.50 L864.0,398.27 L864.6,397.02 L865.2,395.75 L865.8,394.45 L866.4,393.14 L867.0,391.83 L867.6,390.51 L868.2,389.20 L868.8,387.90 L869.4,386.61 L870.0,385.35 L870.6,384.11 L871.2,382.90 L871.8,381.73 L872.4,380.60 L873.0,379.51 L873.6,378.47 L874.2,377.47 L874.8,376.53 L875.4,375.64 L876.0,374.80 L876.6,374.03 L877.2,373.30 L877.8,372.64 L878.4,372.03 L879.0,371.48 L879.6,370.99 L880.2,370.55 L880.8,370.17 L881.4,369.85 L882.0,369.59 L882.6,369.38 L883.2,369.23 L883.8,369.14 L884.4,369.10 L885.0,369.12 L885.6,369.19 L886.2,369.33 L886.8,369.51 L887.4,369.76 L888.0,370.06 L888.6,370.42 L889.2,370.83 L889.8,371.31 L890.4,371.84 L891.0,372.43 L891.6,373.07 L892.2,373.78 L892.8,374.54 L893.4,375.36 L894.0,376.23 L894.6,377.15 L895.2,378.13 L895.8,379.16 L896.4,380.23 L897.0,381.35 L897.6,382.51 L898.2,383.70 L898.8,384.93 L899.4,386.19 L900.0,387.47 L900.6,388.77 L901.2,390.07 L901.8,391.39 L902.4,392.71 L903.0,394.02 L903.6,395.32 L904.2,396.60 L904.8,397.86 L905.4,399.09 L906.0,400.29 L906.6,401.46 L907.2,402.59 L907.8,403.67 L908.4,404.70 L909.0,405.69 L909.6,406.62 L910.2,407.50 L910.8,408.33 L911.4,409.10 L912.0,409.81 L912.6,410.47 L913.2,411.07 L913.8,411.61 L914.4,412.09 L915.0,412.52 L915.6,412.88 L916.2,413.20 L916.8,413.45 L917.4,413.65 L918.0,413.79 L918.6,413.87 L919.2,413.90 L919.8,413.87 L920.4,413.79 L921.0,413.65 L921.6,413.45 L922.2,413.20 L922.8,412.88 L923.4,412.52 L924.0,412.09 L924.6,411.61 L925.2,411.07 L925.8,410.47 L926.4,409.81 L927.0,409.10 L927.6,408.33 L928.2,407.50 L928.8,406.62 L929.4,405.69 L930.0,404.70 L930.6,403.67 L931.2,402.59 L931.8,401.46 L932.4,400.29 L933.0,399.09 L933.6,397.86 L934.2,396.60 L934.8,395.32 L935.4,394.02 L936.0,392.71 L936.6,391.39 L937.2,390.07 L937.8,388.77 L938.4,387.47 L939.0,386.19 L939.6,384.93 L940.2,383.70 L940.8,382.51 L941.4,381.35 L942.0,380.23 L942.6,379.16 L943.2,378.13 L943.8,377.15 L944.4,376.23 L945.0,375.36 L945.6,374.54 L946.2,373.78 L946.8,373.07 L947.4,372.43 L948.0,371.84 L948.6,371.31 L949.2,370.83 L949.8,370.42 L950.4,370.06 L951.0,369.76 L951.6,369.51 L952.2,369.33 L952.8,369.19 L953.4,369.12 L954.0,369.10 L954.6,369.14 L955.2,369.23 L955.8,369.38 L956.4,369.59 L957.0,369.85 L957.6,370.17 L958.2,370.55 L958.8,370.99 L959.4,371.48 L960.0,372.03 L960.6,372.64 L961.2,373.30 L961.8,374.03 L962.4,374.80 L963.0,375.64 L963.6,376.53 L964.2,377.47 L964.8,378.47 L965.4,379.51 L966.0,380.60 L966.6,381.73 L967.2,382.90 L967.8,384.11 L968.4,385.35 L969.0,386.61 L969.6,387.90 L970.2,389.20 L970.8,390.51 L971.4,391.83 L972.0,393.14 L972.6,394.45 L973.2,395.75 L973.8,397.02 L974.4,398.27 L975.0,399.50 L975.6,400.69 L976.2,401.84 L976.8,402.95 L977.4,404.02 L978.0,405.04 L978.6,406.01 L979.2,406.92 L979.8,407.78 L980.4,408.59 L981.0,409.34 L981.6,410.04 L982.2,410.67 L982.8,411.25 L983.4,411.78 L984.0,412.24 L984.6,412.65 L985.2,412.99 L985.8,413.29 L986.4,413.52 L987.0,413.70 L987.6,413.82 L988.2,413.89 L988.8,413.90 L989.4,413.85 L990.0,413.75 L990.6,413.59 L991.2,413.37 L991.8,413.10 L992.4,412.77" stroke="#b3664f" stroke-width="1" fill="none"/><path d="M646.2,435.05 L646.8,435.51 L647.4,435.84 L648.0,436.03 L648.6,436.10 L649.2,436.03 L649.8,435.84 L650.4,435.51 L651.0,435.05 L651.6,434.47 L652.2,433.75 L652.8,432.91 L653.4,431.95 L654.0,430.88 L654.6,429.68 L655.2,428.37 L655.8,426.96 L656.4,425.43 L657.0,423.81 L657.6,422.10 L658.2,420.29 L658.8,418.40 L659.4,416.43 L660.0,414.38 L660.6,412.27 L661.2,410.09 L661.8,407.87 L662.4,405.59 L663.0,403.27 L663.6,400.92 L664.2,398.54 L664.8,396.14 L665.4,393.72 L666.0,391.30 L666.6,388.88 L667.2,386.46 L667.8,384.06 L668.4,381.69 L669.0,379.34 L669.6,377.03 L670.2,374.76 L670.8,372.54 L671.4,370.38 L672.0,368.27 L672.6,366.24 L673.2,364.28 L673.8,362.40 L674.4,360.61 L675.0,358.91 L675.6,357.31 L676.2,355.80 L676.8,354.40 L677.4,353.11 L678.0,351.94 L678.6,350.88 L679.2,349.94 L679.8,349.12 L680.4,348.43 L681.0,347.86 L681.6,347.43 L682.2,347.12 L682.8,346.95 L683.4,346.90 L684.0,346.99 L684.6,347.21 L685.2,347.56 L685.8,348.04 L686.4,348.65 L687.0,349.38 L687.6,350.24 L688.2,351.22 L688.8,352.32 L689.4,353.53 L690.0,354.86 L690.6,356.29 L691.2,357.83 L691.8,359.47 L692.4,361.20 L693.0,363.02 L693.6,364.93 L694.2,366.91 L694.8,368.97 L695.4,371.09 L696.0,373.27 L696.6,375.51 L697.2,377.79 L697.8,380.12 L698.4,382.48 L699.0,384.86 L699.6,387.27 L700.2,389.68 L700.8,392.11 L701.4,394.53 L702.0,396.94 L702.6,399.33 L703.2,401.71 L703.8,404.05 L704.4,406.35 L705.0,408.61 L705.6,410.83 L706.2,412.98 L706.8,415.07 L707.4,417.09 L708.0,419.04 L708.6,420.90 L709.2,422.68 L709.8,424.36 L710.4,425.95 L711.0,427.44 L711.6,428.82 L712.2,430.09 L712.8,431.25 L713.4,432.29 L714.0,433.21 L714.6,434.00 L715.2,434.67 L715.8,435.22 L716.4,435.63 L717.0,435.92 L717.6,436.07 L718.2,436.09 L718.8,435.98 L719.4,435.74 L720.0,435.37 L720.6,434.87 L721.2,434.24 L721.8,433.49 L722.4,432.61 L723.0,431.61 L723.6,430.49 L724.2,429.26 L724.8,427.91 L725.4,426.46 L726.0,424.90 L726.6,423.25 L727.2,421.50 L727.8,419.67 L728.4,417.75 L729.0,415.75 L729.6,413.68 L730.2,411.55 L730.8,409.36 L731.4,407.11 L732.0,404.82 L732.6,402.49 L733.2,400.13 L733.8,397.74 L734.4,395.33 L735.0,392.91 L735.6,390.49 L736.2,388.07 L736.8,385.66 L737.4,383.27 L738.0,380.90 L738.6,378.57 L739.2,376.27 L739.8,374.01 L740.4,371.81 L741.0,369.67 L741.6,367.59 L742.2,365.58 L742.8,363.65 L743.4,361.80 L744.0,360.03 L744.6,358.36 L745.2,356.79 L745.8,355.32 L746.4,353.96 L747.0,352.71 L747.6,351.57 L748.2,350.55 L748.8,349.65 L749.4,348.88 L750.0,348.23 L750.6,347.70 L751.2,347.31 L751.8,347.05 L752.4,346.92 L753.0,346.92 L753.6,347.05 L754.2,347.31 L754.8,347.70 L755.4,348.23 L756.0,348.88 L756.6,349.65 L757.2,350.55 L757.8,351.57 L758.4,352.71 L759.0,353.96 L759.6,355.32 L760.2,356.79 L760.8,358.36 L761.4,360.03 L762.0,361.80 L762.6,363.65 L763.2,365.58 L763.8,367.59 L764.4,369.67 L765.0,371.81 L765.6,374.01 L766.2,376.27 L766.8,378.57 L767.4,380.90 L768.0,383.27 L768.6,385.66 L769.2,388.07 L769.8,390.49 L770.4,392.91 L771.0,395.33 L771.6,397.74 L772.2,400.13 L772.8,402.49 L773.4,404.82 L774.0,407.11 L774.6,409.36 L775.2,411.55 L775.8,413.68 L776.4,415.75 L777.0,417.75 L777.6,419.67 L778.2,421.50 L778.8,423.25 L779.4,424.90 L780.0,426.46 L780.6,427.91 L781.2,429.26 L781.8,430.49 L782.4,431.61 L783.0,432.61 L783.6,433.49 L784.2,434.24 L784.8,434.87 L785.4,435.37 L786.0,435.74 L786.6,435.98 L787.2,436.09 L787.8,436.07 L788.4,435.92 L789.0,435.63 L789.6,435.22 L790.2,434.67 L790.8,434.00 L791.4,433.21 L792.0,432.29 L792.6,431.25 L793.2,430.09 L793.8,428.82 L794.4,427.44 L795.0,425.95 L795.6,424.36 L796.2,422.68 L796.8,420.90 L797.4,419.04 L798.0,417.09 L798.6,415.07 L799.2,412.98 L799.8,410.83 L800.4,408.61 L801.0,406.35 L801.6,404.05 L802.2,401.71 L802.8,399.33 L803.4,396.94 L804.0,394.53 L804.6,392.11 L805.2,389.68 L805.8,387.27 L806.4,384.86 L807.0,382.48 L807.6,380.12 L808.2,377.79 L808.8,375.51 L809.4,373.27 L810.0,371.09 L810.6,368.97 L811.2,366.91 L811.8,364.93 L812.4,363.02 L813.0,361.20 L813.6,359.47 L814.2,357.83 L814.8,356.29 L815.4,354.86 L816.0,353.53 L816.6,352.32 L817.2,351.22 L817.8,350.24 L818.4,349.38 L819.0,348.65 L819.6,348.04 L820.2,347.56 L820.8,347.21 L821.4,346.99 L822.0,346.90 L822.6,346.95 L823.2,347.12 L823.8,347.43 L824.4,347.86 L825.0,348.43 L825.6,349.12 L826.2,349.94 L826.8,350.88 L827.4,351.94 L828.0,353.11 L828.6,354.40 L829.2,355.80 L829.8,357.31 L830.4,358.91 L831.0,360.61 L831.6,362.40 L832.2,364.28 L832.8,366.24 L833.4,368.27 L834.0,370.38 L834.6,372.54 L835.2,374.76 L835.8,377.03 L836.4,379.34 L837.0,381.69 L837.6,384.06 L838.2,386.46 L838.8,388.88 L839.4,391.30 L840.0,393.72 L840.6,396.14 L841.2,398.54 L841.8,400.92 L842.4,403.27 L843.0,405.59 L843.6,407.87 L844.2,410.09 L844.8,412.27 L845.4,414.38 L846.0,416.43 L846.6,418.40 L847.2,420.29 L847.8,422.10 L848.4,423.81 L849.0,425.43 L849.6,426.96 L850.2,428.37 L850.8,429.68 L851.4,430.88 L852.0,431.95 L852.6,432.91 L853.2,433.75 L853.8,434.47 L854.4,435.05 L855.0,435.51 L855.6,435.84 L856.2,436.03 L856.8,436.10 L857.4,436.03 L858.0,435.84 L858.6,435.51 L859.2,435.05 L859.8,434.47 L860.4,433.75 L861.0,432.91 L861.6,431.95 L862.2,430.88 L862.8,429.68 L863.4,428.37 L864.0,426.96 L864.6,425.43 L865.2,423.81 L865.8,422.10 L866.4,420.29 L867.0,418.40 L867.6,416.43 L868.2,414.38 L868.8,412.27 L869.4,410.09 L870.0,407.87 L870.6,405.59 L871.2,403.27 L871.8,400.92 L872.4,398.54 L873.0,396.14 L873.6,393.72 L874.2,391.30 L874.8,388.88 L875.4,386.46 L876.0,384.06 L876.6,381.69 L877.2,379.34 L877.8,377.03 L878.4,374.76 L879.0,372.54 L879.6,370.38 L880.2,368.27 L880.8,366.24 L881.4,364.28 L882.0,362.40 L882.6,360.61 L883.2,358.91 L883.8,357.31 L884.4,355.80 L885.0,354.40 L885.6,353.11 L886.2,351.94 L886.8,350.88 L887.4,349.94 L888.0,349.12 L888.6,348.43 L889.2,347.86 L889.8,347.43 L890.4,347.12 L891.0,346.95 L891.6,346.90 L892.2,346.99 L892.8,347.21 L893.4,347.56 L894.0,348.04 L894.6,348.65 L895.2,349.38 L895.8,350.24 L896.4,351.22 L897.0,352.32 L897.6,353.53 L898.2,354.86 L898.8,356.29 L899.4,357.83 L900.0,359.47 L900.6,361.20 L901.2,363.02 L901.8,364.93 L902.4,366.91 L903.0,368.97 L903.6,371.09 L904.2,373.27 L904.8,375.51 L905.4,377.79 L906.0,380.12 L906.6,382.48 L907.2,384.86 L907.8,387.27 L908.4,389.68 L909.0,392.11 L909.6,394.53 L910.2,396.94 L910.8,399.33 L911.4,401.71 L912.0,404.05 L912.6,406.35 L913.2,408.61 L913.8,410.83 L914.4,412.98 L915.0,415.07 L915.6,417.09 L916.2,419.04 L916.8,420.90 L917.4,422.68 L918.0,424.36 L918.6,425.95 L919.2,427.44 L919.8,428.82 L920.4,430.09 L921.0,431.25 L921.6,432.29 L922.2,433.21 L922.8,434.00 L923.4,434.67 L924.0,435.22 L924.6,435.63 L925.2,435.92 L925.8,436.07 L926.4,436.09 L927.0,435.98 L927.6,435.74 L928.2,435.37 L928.8,434.87 L929.4,434.24 L930.0,433.49 L930.6,432.61 L931.2,431.61 L931.8,430.49 L932.4,429.26 L933.0,427.91 L933.6,426.46 L934.2,424.90 L934.8,423.25 L935.4,421.50 L936.0,419.67 L936.6,417.75 L937.2,415.75 L937.8,413.68 L938.4,411.55 L939.0,409.36 L939.6,407.11 L940.2,404.82 L940.8,402.49 L941.4,400.13 L942.0,397.74 L942.6,395.33 L943.2,392.91 L943.8,390.49 L944.4,388.07 L945.0,385.66 L945.6,383.27 L946.2,380.90 L946.8,378.57 L947.4,376.27 L948.0,374.01 L948.6,371.81 L949.2,369.67 L949.8,367.59 L950.4,365.58 L951.0,363.65 L951.6,361.80 L952.2,360.03 L952.8,358.36 L953.4,356.79 L954.0,355.32 L954.6,353.96 L955.2,352.71 L955.8,351.57 L956.4,350.55 L957.0,349.65 L957.6,348.88 L958.2,348.23 L958.8,347.70 L959.4,347.31 L960.0,347.05 L960.6,346.92 L961.2,346.92 L961.8,347.05 L962.4,347.31 L963.0,347.70 L963.6,348.23 L964.2,348.88 L964.8,349.65 L965.4,350.55 L966.0,351.57 L966.6,352.71 L967.2,353.96 L967.8,355.32 L968.4,356.79 L969.0,358.36 L969.6,360.03 L970.2,361.80 L970.8,363.65 L971.4,365.58 L972.0,367.59 L972.6,369.67 L973.2,371.81 L973.8,374.01 L974.4,376.27 L975.0,378.57 L975.6,380.90 L976.2,383.27 L976.8,385.66 L977.4,388.07 L978.0,390.49 L978.6,392.91 L979.2,395.33 L979.8,397.74 L980.4,400.13 L981.0,402.49 L981.6,404.82 L982.2,407.11 L982.8,409.36 L983.4,411.55 L984.0,413.68 L984.6,415.75 L985.2,417.75 L985.8,419.67 L986.4,421.50 L987.0,423.25 L987.6,424.90 L988.2,426.46 L988.8,427.91 L989.4,429.26 L990.0,430.49 L990.6,431.61 L991.2,432.61 L991.8,433.49 L992.4,434.24" stroke="#8db390" stroke-width="1" fill="none"/><line x1="646.20" y1="318.50" x2="646.20" y2="463.00" stroke="#6a2020" stroke-width="1.2"/><rect x="992.80" y="319.50" width="3.00" height="142.50" fill="#14144e"/><path d="M642.7 320.0 L649.7 320.0 L646.2 323.5 Z" stroke="none" stroke-width="1" fill="#58c8c0"/><path d="M989.0 320.0 L996.0 320.0 L992.5 323.5 Z" stroke="none" stroke-width="1" fill="#e0d040"/><rect x="640.00" y="463.50" width="358.00" height="11.00" fill="#f0f0f0"/><path d="M645.5 466 L643.5 468.5 L645.5 471" stroke="#555" stroke-width="1" fill="none"/><rect x="650.00" y="465.00" width="9.00" height="8.00" fill="#cdcdcd"/><path d="M993.5 466 L995.5 468.5 L993.5 471" stroke="#555" stroke-width="1" fill="none"/><line x1="641.00" y1="475.20" x2="998.00" y2="475.20" stroke="#c8c8c8" stroke-width="1"/><text x="641.00" y="486.20" font-size="6.98" fill="#222" textLength="7.21" lengthAdjust="spacingAndGlyphs">T1</text><text x="641.00" y="494.00" font-size="6.98" fill="#222" textLength="7.21" lengthAdjust="spacingAndGlyphs">T2</text><text x="641.00" y="505.80" font-size="6.98" fill="#222" textLength="16.21" lengthAdjust="spacingAndGlyphs">T2-T1</text><rect x="653.00" y="479.00" width="7.80" height="8.40" fill="#e0e0e0"/><rect x="662.60" y="479.00" width="7.20" height="8.40" fill="#e0e0e0"/><path d="M659 483.2 L654.5 483.2 M656.5 481.2 L654.5 483.2 L656.5 485.2" stroke="#000" stroke-width="1.2" fill="none"/><path d="M663.8 483.2 L668.5 483.2 M666.5 481.2 L668.5 483.2 L666.5 485.2" stroke="#000" stroke-width="1.2" fill="none"/><rect x="653.00" y="489.20" width="7.80" height="8.20" fill="#e0e0e0"/><rect x="662.60" y="489.20" width="7.20" height="8.20" fill="#e0e0e0"/><path d="M659 493.29999999999995 L654.5 493.29999999999995 M656.5 491.29999999999995 L654.5 493.29999999999995 L656.5 495.29999999999995" stroke="#000" stroke-width="1.2" fill="none"/><path d="M663.8 493.29999999999995 L668.5 493.29999999999995 M666.5 491.29999999999995 L668.5 493.29999999999995 L666.5 495.29999999999995" stroke="#000" stroke-width="1.2" fill="none"/><rect x="671.60" y="475.40" width="284.40" height="31.00" fill="#fff"/><line x1="672.20" y1="475.40" x2="672.20" y2="507.00" stroke="#a8a8a8" stroke-width="1.2"/><line x1="671.60" y1="475.90" x2="956.00" y2="475.90" stroke="#a8a8a8" stroke-width="1"/><text x="681.00" y="482.20" font-size="6.69" fill="#333" textLength="17.59" lengthAdjust="spacingAndGlyphs">Время</text><text x="676.20" y="489.80" font-size="6.69" fill="#333" textLength="32.00" lengthAdjust="spacingAndGlyphs">574.838 ms</text><text x="724.20" y="482.20" font-size="6.69" fill="#333" textLength="25.99" lengthAdjust="spacingAndGlyphs">Канал_A</text><text x="725.00" y="489.80" font-size="6.69" fill="#333" textLength="27.99" lengthAdjust="spacingAndGlyphs">-4.253 mV</text><text x="771.00" y="482.20" font-size="6.69" fill="#333" textLength="25.19" lengthAdjust="spacingAndGlyphs">Канал_B</text><text x="817.80" y="482.20" font-size="6.69" fill="#333" textLength="25.79" lengthAdjust="spacingAndGlyphs">Канал_C</text><text x="864.40" y="482.20" font-size="6.69" fill="#333" textLength="25.59" lengthAdjust="spacingAndGlyphs">Канал_D</text><text x="861.00" y="489.60" font-size="6.69" fill="#333" textLength="36.40" lengthAdjust="spacingAndGlyphs">-936.413 mV</text><rect x="961.50" y="476.50" width="35.00" height="8.50" fill="#e1e1e1" stroke="#c4c4c4" stroke-width="1"/><text x="970.00" y="482.60" font-size="6.69" fill="#222" textLength="18.01" lengthAdjust="spacingAndGlyphs">Экран</text><rect x="961.50" y="488.50" width="35.00" height="9.50" fill="#e1e1e1" stroke="#c4c4c4" stroke-width="1"/><text x="963.00" y="496.00" font-size="6.69" fill="#222" textLength="32.00" lengthAdjust="spacingAndGlyphs">Сохранить</text><text x="967.00" y="507.00" font-size="6.69" fill="#333" textLength="12.01" lengthAdjust="spacingAndGlyphs">GND</text><circle cx="985.50" cy="505.00" r="3.30" fill="#fff" stroke="#bbb" stroke-width="0.8"/><line x1="735.80" y1="508.00" x2="735.80" y2="564.00" stroke="#dcdcdc" stroke-width="1"/><line x1="874.50" y1="508.00" x2="874.50" y2="564.00" stroke="#dcdcdc" stroke-width="1"/><line x1="641.00" y1="518.50" x2="735.00" y2="518.50" stroke="#e6e6e6" stroke-width="1"/><text x="644.00" y="516.40" font-size="7.27" fill="#333" textLength="30.98" lengthAdjust="spacingAndGlyphs">Развертка</text><text x="644.00" y="528.40" font-size="7.27" fill="#333" textLength="18.98" lengthAdjust="spacingAndGlyphs">Шкала</text><rect x="671.50" y="520.50" width="63.60" height="10.00" fill="#fff" stroke="#9c9c9c" stroke-width="1"/><text x="674.00" y="528.00" font-size="6.98" fill="#222" textLength="30.00" lengthAdjust="spacingAndGlyphs">500 us/Div</text><text x="644.00" y="539.00" font-size="7.27" fill="#333" textLength="28.97" lengthAdjust="spacingAndGlyphs">Задержка</text><rect x="684.10" y="532.50" width="51.00" height="9.00" fill="#fff" stroke="#9c9c9c" stroke-width="1"/><text x="686.00" y="539.50" font-size="6.98" fill="#222" textLength="3.01" lengthAdjust="spacingAndGlyphs">0</text><rect x="642.50" y="550.50" width="13.40" height="8.60" fill="#cce4f7" stroke="#6aaee6" stroke-width="1"/><text x="645.00" y="557.50" font-size="6.98" fill="#222" textLength="8.00" lengthAdjust="spacingAndGlyphs">Y/T</text><rect x="660.10" y="550.50" width="18.40" height="8.60" fill="#e1e1e1" stroke="#dadada" stroke-width="1"/><text x="662.00" y="557.50" font-size="6.98" fill="#222" textLength="14.99" lengthAdjust="spacingAndGlyphs">A/B &gt;</text><rect x="681.50" y="550.50" width="21.60" height="8.60" fill="#e1e1e1" stroke="#dadada" stroke-width="1"/><text x="684.00" y="557.50" font-size="6.98" fill="#222" textLength="17.00" lengthAdjust="spacingAndGlyphs">A+B &gt;</text><text x="741.00" y="516.40" font-size="7.27" fill="#333" textLength="26.59" lengthAdjust="spacingAndGlyphs">Канал_A</text><text x="741.00" y="529.40" font-size="7.27" fill="#333" textLength="19.98" lengthAdjust="spacingAndGlyphs">Шкала</text><rect x="768.50" y="520.10" width="52.00" height="9.80" fill="#fff" stroke="#9c9c9c" stroke-width="1"/><rect x="769.00" y="520.60" width="46.00" height="8.80" fill="#f4f000"/><rect x="813.00" y="520.60" width="4.00" height="8.80" fill="#f8f480"/><text x="771.60" y="527.00" font-size="6.98" fill="#222" textLength="30.79" lengthAdjust="spacingAndGlyphs">500 mV/Div</text><text x="741.00" y="538.60" font-size="7.27" fill="#333" textLength="30.60" lengthAdjust="spacingAndGlyphs">Смещение</text><rect x="780.50" y="531.50" width="46.60" height="9.60" fill="#fff" stroke="#9c9c9c" stroke-width="1"/><text x="784.00" y="539.00" font-size="6.98" fill="#222" textLength="3.01" lengthAdjust="spacingAndGlyphs">0</text><rect x="740.90" y="552.50" width="12.00" height="9.40" fill="#cce4f7" stroke="#6aaee6" stroke-width="1"/><text x="743.00" y="560.00" font-size="6.98" fill="#222" textLength="8.00" lengthAdjust="spacingAndGlyphs">AC</text><rect x="756.10" y="552.50" width="11.40" height="9.40" fill="#e1e1e1" stroke="#dadada" stroke-width="1"/><text x="760.00" y="560.00" font-size="6.98" fill="#222" textLength="3.01" lengthAdjust="spacingAndGlyphs">0</text><rect x="770.50" y="552.50" width="12.00" height="9.40" fill="#e1e1e1" stroke="#dadada" stroke-width="1"/><text x="772.50" y="560.00" font-size="6.98" fill="#222" textLength="8.00" lengthAdjust="spacingAndGlyphs">DC</text><rect x="786.10" y="552.50" width="7.80" height="9.40" fill="#e1e1e1" stroke="#dadada" stroke-width="1"/><text x="788.50" y="558.00" font-size="6.98" fill="#222" textLength="2.98" lengthAdjust="spacingAndGlyphs">-</text><circle cx="811.50" cy="556.50" r="3.50" fill="#fff" stroke="#d4d4d4" stroke-width="0.8"/><circle cx="811.50" cy="556.50" r="1.30" fill="#c0c0c0"/><circle cx="828.00" cy="556.50" r="3.50" fill="#fff" stroke="#d4d4d4" stroke-width="0.8"/><circle cx="845.00" cy="556.50" r="3.50" fill="#fff" stroke="#d4d4d4" stroke-width="0.8"/><circle cx="861.50" cy="556.50" r="3.50" fill="#fff" stroke="#d4d4d4" stroke-width="0.8"/><circle cx="861.50" cy="556.50" r="1.30" fill="#c0c0c0"/><defs><radialGradient id="kg" cx="45%" cy="40%" r="60%"><stop offset="0" stop-color="#d8d8d8"/><stop offset="0.5" stop-color="#969696"/><stop offset="1" stop-color="#404040"/></radialGradient></defs><circle cx="850.00" cy="532.00" r="10.00" fill="url(#kg)"/><path d="M844 530 A6 6 0 0 1 856 531" stroke="#666" stroke-width="1.6" fill="none"/><path d="M855 535 A6 6 0 0 1 845 536" stroke="#777" stroke-width="1.4" fill="none"/><text x="848.00" y="522.00" font-size="6.98" fill="#333" textLength="4.78" lengthAdjust="spacingAndGlyphs">A</text><text x="864.00" y="535.00" font-size="6.98" fill="#333" textLength="4.01" lengthAdjust="spacingAndGlyphs">B</text><text x="847.50" y="549.00" font-size="6.98" fill="#333" textLength="4.51" lengthAdjust="spacingAndGlyphs">C</text><text x="833.00" y="535.00" font-size="6.98" fill="#333" textLength="4.51" lengthAdjust="spacingAndGlyphs">D</text><text x="878.00" y="516.60" font-size="7.27" fill="#333" textLength="45.59" lengthAdjust="spacingAndGlyphs">Синхронизация</text><text x="881.60" y="527.00" font-size="7.27" fill="#333" textLength="19.95" lengthAdjust="spacingAndGlyphs">Запуск</text><rect x="917.50" y="520.50" width="13.60" height="6.60" fill="#cce4f7" stroke="#6aaee6" stroke-width="1"/><path d="M922 526 L924 526 L925 522 L927 522" stroke="#222" stroke-width="0.8" fill="none"/><rect x="936.10" y="520.50" width="13.00" height="6.60" fill="#e1e1e1" stroke="#c8c8c8" stroke-width="1"/><path d="M940 522 L942 522 L943 526 L945 526" stroke="#222" stroke-width="0.8" fill="none"/><text x="964.00" y="526.00" font-size="6.98" fill="#333" textLength="14.99" lengthAdjust="spacingAndGlyphs">Внеш</text><circle cx="985.50" cy="523.50" r="3.50" fill="#fff" stroke="#bbb" stroke-width="0.8"/><text x="881.60" y="538.60" font-size="7.27" fill="#333" textLength="24.41" lengthAdjust="spacingAndGlyphs">Уровень</text><rect x="917.50" y="532.10" width="56.50" height="9.80" fill="#fff" stroke="#9c9c9c" stroke-width="1"/><rect x="975.00" y="532.10" width="18.10" height="9.80" fill="#fff" stroke="#9c9c9c" stroke-width="1"/><text x="919.50" y="540.00" font-size="6.98" fill="#222" textLength="3.01" lengthAdjust="spacingAndGlyphs">0</text><text x="981.00" y="540.00" font-size="6.98" fill="#222" textLength="4.01" lengthAdjust="spacingAndGlyphs">V</text><rect x="877.50" y="551.50" width="17.60" height="9.00" fill="#cce4f7" stroke="#6aaee6" stroke-width="1"/><text x="880.00" y="559.00" font-size="6.98" fill="#222" textLength="13.00" lengthAdjust="spacingAndGlyphs">Одн.</text><rect x="898.10" y="551.50" width="17.00" height="9.00" fill="#e1e1e1" stroke="#dadada" stroke-width="1"/><text x="900.00" y="559.00" font-size="6.98" fill="#222" textLength="13.01" lengthAdjust="spacingAndGlyphs">Норм</text><rect x="918.10" y="551.50" width="17.00" height="9.00" fill="#e1e1e1" stroke="#dadada" stroke-width="1"/><text x="920.00" y="559.00" font-size="6.98" fill="#222" textLength="13.00" lengthAdjust="spacingAndGlyphs">Авто</text><rect x="938.50" y="551.50" width="16.40" height="9.00" fill="#e1e1e1" stroke="#dadada" stroke-width="1"/><text x="941.00" y="559.00" font-size="6.98" fill="#222" textLength="10.99" lengthAdjust="spacingAndGlyphs">Нет</text><rect x="959.50" y="551.50" width="14.00" height="9.00" fill="#cce4f7" stroke="#6aaee6" stroke-width="1"/><text x="961.50" y="559.00" font-size="6.98" fill="#222" textLength="9.99" lengthAdjust="spacingAndGlyphs">A &gt;</text><rect x="976.50" y="551.50" width="17.00" height="9.00" fill="#e1e1e1" stroke="#dadada" stroke-width="1"/><text x="978.00" y="559.00" font-size="6.98" fill="#222" textLength="13.99" lengthAdjust="spacingAndGlyphs">Внеш</text><ellipse cx="1000" cy="522.5" rx="9.5" ry="12" fill="#080808"/><rect x="169.40" y="475.90" width="1.20" height="1.20" fill="#a8a8a8"/><rect x="166.90" y="475.90" width="1.20" height="1.20" fill="#a8a8a8"/><rect x="169.40" y="473.40" width="1.20" height="1.20" fill="#a8a8a8"/><rect x="164.40" y="475.90" width="1.20" height="1.20" fill="#a8a8a8"/><rect x="169.40" y="470.90" width="1.20" height="1.20" fill="#a8a8a8"/><rect x="166.90" y="473.40" width="1.20" height="1.20" fill="#a8a8a8"/><rect x="834.90" y="287.90" width="1.20" height="1.20" fill="#a8a8a8"/><rect x="832.40" y="287.90" width="1.20" height="1.20" fill="#a8a8a8"/><rect x="834.90" y="285.40" width="1.20" height="1.20" fill="#a8a8a8"/><rect x="829.90" y="287.90" width="1.20" height="1.20" fill="#a8a8a8"/><rect x="834.90" y="282.90" width="1.20" height="1.20" fill="#a8a8a8"/><rect x="832.40" y="285.40" width="1.20" height="1.20" fill="#a8a8a8"/><rect x="995.40" y="562.40" width="1.20" height="1.20" fill="#a8a8a8"/><rect x="992.90" y="562.40" width="1.20" height="1.20" fill="#a8a8a8"/><rect x="995.40" y="559.90" width="1.20" height="1.20" fill="#a8a8a8"/><rect x="990.40" y="562.40" width="1.20" height="1.20" fill="#a8a8a8"/><rect x="995.40" y="557.40" width="1.20" height="1.20" fill="#a8a8a8"/><rect x="992.90" y="559.90" width="1.20" height="1.20" fill="#a8a8a8"/><path d="M600.4,357.6 L606.7,348.6 L603.5,366.5 M595.4,367 L607.6,367.5" stroke="#3a3ab4" stroke-width="1.7" fill="none" stroke-linecap="round" stroke-linejoin="round"/><path d="M616.3,355.8 L616.8,368.8 M616.3,356 C619,354.5 622.5,354.5 621.5,358.5 C621,360.5 618.5,360.8 617.5,361 C621,360.5 625.5,361 625,364.5 C624.5,367.5 620,368.5 616.8,368.8" stroke="#3a3ab4" stroke-width="1.6" fill="none" stroke-linecap="round" stroke-linejoin="round"/><path d="M630,354.9 C640,353.5 650,352 662,350.8" stroke="#2a2aa8" stroke-width="1.9" fill="none" stroke-linecap="round"/><path d="M659,348 L671,351.8 L663,357 Z" stroke="#2020a0" stroke-width="1.2" fill="#2020a0" stroke-linejoin="round"/></svg></body></html>
